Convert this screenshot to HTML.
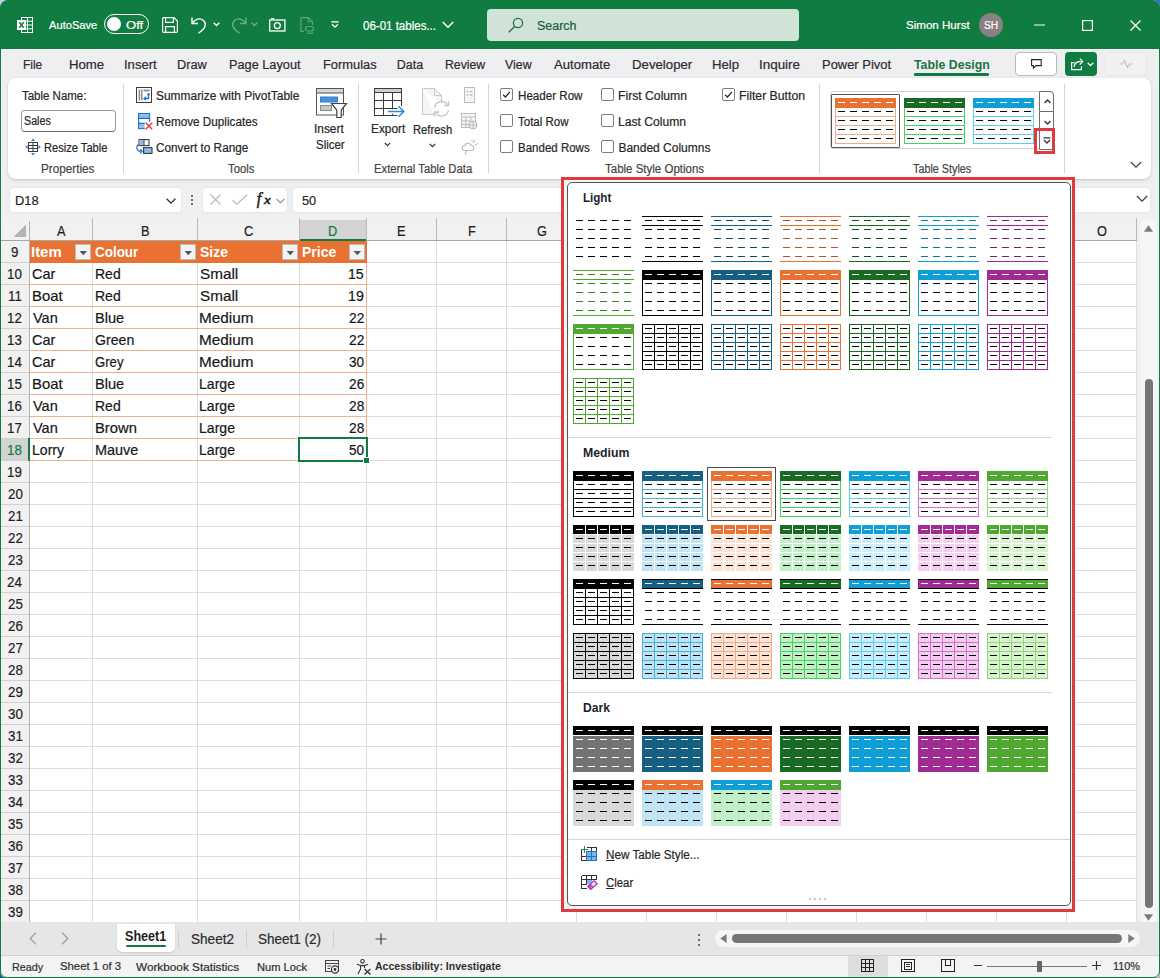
<!DOCTYPE html>
<html lang="en"><head><meta charset="utf-8"><title>Excel - Table Styles</title>
<style>
*{box-sizing:border-box;margin:0;padding:0}
html,body{width:1160px;height:978px;overflow:hidden}
body{background:#999;font-family:"Liberation Sans",sans-serif;position:relative}
#w{position:absolute;left:0;top:0;width:1160px;height:978px;background:#efeff1;border-radius:8px 8px 7px 7px;overflow:hidden}
#w div,#w svg,#w span.t{position:absolute}
span.t{white-space:pre;line-height:1;transform-origin:0 0;display:block;-webkit-text-stroke:0.2px}
svg{overflow:visible}
i.c{position:absolute;width:12px;height:12px}
#w:after{content:'';position:absolute;left:0;top:0;right:0;bottom:0;border:1px solid #107c41;border-radius:8px 8px 7px 7px;pointer-events:none}
</style></head>
<body><i class="c" style="left:0;top:0;background:#c3cdec"></i><i class="c" style="right:0;top:0;background:#2c70dc"></i><i class="c" style="left:0;bottom:0;background:#0f5f8e"></i><i class="c" style="right:0;bottom:0;background:#b5b5b5"></i><div id="w">
<div style="left:0px;top:0px;width:1160px;height:49px;background:#107c41;"></div>
<svg style="left:17px;top:17px;" width="17" height="17" viewBox="0 0 17 17">
<rect x="4.5" y="0.5" width="11" height="15" fill="none" stroke="#fff" stroke-width="1"/>
<path d="M4.5 4.2H15.5M4.5 8H15.5M4.5 11.8H15.5M10.5 0.5V15.5" stroke="#fff" stroke-width="1" fill="none"/>
<rect x="0" y="3" width="9" height="10" fill="#fff"/>
<path d="M2.3 5.2L6.7 10.8M6.7 5.2L2.3 10.8" stroke="#107c41" stroke-width="1.5" fill="none"/>
</svg>
<span class="t" style="left:48.80px;top:20.00px;font-size:11px;color:#fff;transform:scaleX(1.0127);">AutoSave</span>
<div style="left:104px;top:14px;width:45px;height:20px;border:1.3px solid #fff;border-radius:10px;"></div>
<div style="left:107px;top:17px;width:14px;height:14px;background:#fff;border-radius:50%;"></div>
<span class="t" style="left:125.81px;top:20.00px;font-size:11px;color:#fff;transform:scaleX(1.1857);">Off</span>
<svg style="left:162px;top:17px;" width="16" height="16" viewBox="0 0 16 16">
<path d="M1.5 0.6H12L15.4 4V14.2Q15.4 15.4 14.2 15.4H1.8Q0.6 15.4 0.6 14.2V1.5Q0.6 0.6 1.5 0.6Z" fill="none" stroke="#fff" stroke-width="1.2"/>
<path d="M3.6 0.6V5.4H11.4V0.6M3.6 15.4V9.6H12.4V15.4" fill="none" stroke="#fff" stroke-width="1.2"/>
</svg>
<svg style="left:191px;top:16px;" width="17" height="18" viewBox="0 0 17 18">
<path d="M1 1.5V7.5H7" fill="none" stroke="#fff" stroke-width="1.4"/>
<path d="M1.5 7C4 3 9 1.5 12.5 4.5C15.5 7.5 14.5 11.5 11.5 14L7.5 17.3" fill="none" stroke="#fff" stroke-width="1.4"/>
</svg>
<svg style="left:213px;top:22px;" width="7" height="5" viewBox="0 0 7 5"><path d="M0.7 0.8L3.5 3.6L6.3 0.8" fill="none" stroke="#fff" stroke-width="1.4"/></svg>
<svg style="left:230px;top:16px;" width="17" height="18" viewBox="0 0 17 18">
<path d="M16 1.5V7.5H10" fill="none" stroke="#6bb08a" stroke-width="1.4"/>
<path d="M15.5 7C13 3 8 1.5 4.5 4.5C1.5 7.5 2.5 11.5 5.5 14L9.5 17.3" fill="none" stroke="#6bb08a" stroke-width="1.4"/>
</svg>
<svg style="left:251px;top:22px;" width="7" height="5" viewBox="0 0 7 5"><path d="M0.7 0.8L3.5 3.6L6.3 0.8" fill="none" stroke="#6bb08a" stroke-width="1.4"/></svg>
<svg style="left:269px;top:18px;" width="17" height="14" viewBox="0 0 17 14">
<rect x="0.7" y="2" width="15.2" height="11" fill="none" stroke="#fff" stroke-width="1.3"/>
<path d="M2 0.7H5.2" stroke="#fff" stroke-width="1.3"/>
<circle cx="8.3" cy="7.6" r="3" fill="none" stroke="#fff" stroke-width="1.3"/>
</svg>
<svg style="left:300px;top:17px;" width="15" height="17" viewBox="0 0 15 17">
<path d="M1 0.6H8.5L12.5 4.6V8M1 0.6V14.4H4" fill="none" stroke="#5aa67c" stroke-width="1.2"/>
<path d="M8.3 0.8V4.8H12.3" fill="none" stroke="#5aa67c" stroke-width="1.1"/>
<rect x="5.5" y="9.5" width="8" height="4.5" rx="2.2" fill="none" stroke="#5aa67c" stroke-width="1.2"/>
<path d="M7 16.2H13.5" stroke="#5aa67c" stroke-width="1.2"/>
</svg>
<svg style="left:330.5px;top:21px;" width="8" height="7" viewBox="0 0 8 7"><path d="M0.3 0.9H7.7" stroke="#fff" stroke-width="1.3"/><path d="M1 3.3L4 6.2L7 3.3" fill="none" stroke="#fff" stroke-width="1.3"/></svg>
<span class="t" style="left:363.32px;top:20.00px;font-size:12px;color:#fff;transform:scaleX(0.9597);">06-01 tables...</span>
<svg style="left:442px;top:21px;" width="12" height="8" viewBox="0 0 12 8"><path d="M0.8 1L6 6.2L11.2 1" fill="none" stroke="#fff" stroke-width="1.4"/></svg>
<div style="left:487px;top:9px;width:312px;height:32px;background:#cfe3d7;border-radius:4px;"></div>
<svg style="left:508px;top:17px;" width="16" height="16" viewBox="0 0 16 16"><circle cx="10" cy="6" r="4.6" fill="none" stroke="#2b6b48" stroke-width="1.3"/><path d="M6.6 9.4L0.8 15.2" stroke="#2b6b48" stroke-width="1.4"/></svg>
<span class="t" style="left:536.88px;top:20.00px;font-size:12px;color:#1f5c3b;transform:scaleX(1.0381);">Search</span>
<span class="t" style="left:906.45px;top:20.00px;font-size:10.5px;color:#fff;transform:scaleX(1.1014);">Simon Hurst</span>
<div style="left:979px;top:13px;width:24px;height:24px;background:#8b8082;border-radius:50%;"></div>
<span class="t" style="left:983.99px;top:21.00px;font-size:10px;color:#fff;transform:scaleX(1.0159);">SH</span>
<svg style="left:1034px;top:24px;" width="11" height="2" viewBox="0 0 11 2"><path d="M0 1H11" stroke="#fff" stroke-width="1.2"/></svg>
<svg style="left:1082px;top:20px;" width="11" height="11" viewBox="0 0 11 11"><rect x="0.6" y="0.6" width="9.8" height="9.8" fill="none" stroke="#fff" stroke-width="1.2"/></svg>
<svg style="left:1130px;top:20px;" width="11" height="11" viewBox="0 0 11 11"><path d="M0.5 0.5L10.5 10.5M10.5 0.5L0.5 10.5" stroke="#fff" stroke-width="1.2"/></svg>
<div style="left:0px;top:49px;width:1px;height:929px;background:#107c41;"></div>
<div style="left:1159px;top:49px;width:1px;height:929px;background:#107c41;"></div>
<div style="left:0px;top:977px;width:1160px;height:1px;background:#107c41;"></div>
<span class="t" style="left:22.64px;top:59.00px;font-size:12.5px;color:#2b2b2b;transform:scaleX(0.9570);">File</span>
<span class="t" style="left:68.75px;top:59.00px;font-size:12.5px;color:#2b2b2b;transform:scaleX(1.0535);">Home</span>
<span class="t" style="left:124.15px;top:59.00px;font-size:12.5px;color:#2b2b2b;transform:scaleX(1.0432);">Insert</span>
<span class="t" style="left:177.38px;top:59.00px;font-size:12.5px;color:#2b2b2b;transform:scaleX(1.0213);">Draw</span>
<span class="t" style="left:229.48px;top:59.00px;font-size:12.5px;color:#2b2b2b;transform:scaleX(1.0188);">Page Layout</span>
<span class="t" style="left:322.57px;top:59.00px;font-size:12.5px;color:#2b2b2b;transform:scaleX(1.0296);">Formulas</span>
<span class="t" style="left:396.80px;top:59.00px;font-size:12.5px;color:#2b2b2b;">Data</span>
<span class="t" style="left:444.52px;top:59.00px;font-size:12.5px;color:#2b2b2b;transform:scaleX(0.9800);">Review</span>
<span class="t" style="left:505.10px;top:59.00px;font-size:12.5px;color:#2b2b2b;transform:scaleX(0.9888);">View</span>
<span class="t" style="left:554.00px;top:59.00px;font-size:12.5px;color:#2b2b2b;transform:scaleX(1.0509);">Automate</span>
<span class="t" style="left:631.54px;top:59.00px;font-size:12.5px;color:#2b2b2b;transform:scaleX(1.0573);">Developer</span>
<span class="t" style="left:711.55px;top:59.00px;font-size:12.5px;color:#2b2b2b;transform:scaleX(1.0537);">Help</span>
<span class="t" style="left:759.12px;top:59.00px;font-size:12.5px;color:#2b2b2b;transform:scaleX(1.0738);">Inquire</span>
<span class="t" style="left:822.26px;top:59.00px;font-size:12.5px;color:#2b2b2b;transform:scaleX(1.0351);">Power Pivot</span>
<span class="t" style="left:913.70px;top:59.00px;font-size:12.5px;color:#1a7343;transform:scaleX(0.9868);font-weight:700;-webkit-text-stroke:0;">Table Design</span>
<div style="left:913.8px;top:73px;width:75px;height:2.5px;background:#107c41;border-radius:1px;"></div>
<div style="left:1015px;top:52px;width:42px;height:24px;background:#fff;border:1px solid #b9b9b9;border-radius:4px;"></div>
<svg style="left:1031px;top:59px;" width="11" height="10" viewBox="0 0 11 10"><path d="M0.6 0.6H10.2V6.6H5L2.4 9.2V6.6H0.6Z" fill="none" stroke="#222" stroke-width="1.1"/></svg>
<div style="left:1065px;top:52px;width:32px;height:24px;background:#107c41;border-radius:4px;"></div>
<svg style="left:1070px;top:57px;" width="14" height="14" viewBox="0 0 14 14">
<path d="M4.5 5.6H1.6V12.6H11.4V9.6" fill="none" stroke="#fff" stroke-width="1.2"/>
<path d="M4 10C4.5 6.5 7 4.6 10 4.6H12.6M9.8 1.6L12.8 4.6L9.8 7.6" fill="none" stroke="#fff" stroke-width="1.2"/>
</svg>
<svg style="left:1087px;top:62px;" width="7" height="5" viewBox="0 0 7 5"><path d="M0.7 0.8L3.5 3.6L6.3 0.8" fill="none" stroke="#fff" stroke-width="1.3"/></svg>
<div style="left:1105px;top:52px;width:42px;height:24px;background:#f1f1f1;border:1px solid #e6e6e6;border-radius:4px;"></div>
<svg style="left:1119px;top:59px;" width="14" height="10" viewBox="0 0 14 10"><path d="M0.5 5H3.5L5.5 1.5L8.5 8.5L10.5 5H13.5" fill="none" stroke="#c4c4c4" stroke-width="1.2"/></svg>
<div style="left:8px;top:78px;width:1143px;height:100.5px;background:#fff;border-radius:8px;box-shadow:0 1px 3px rgba(0,0,0,.18);"></div>
<div style="left:123px;top:84px;width:1px;height:89px;background:#d4d4d4;"></div>
<div style="left:358px;top:84px;width:1px;height:89px;background:#d4d4d4;"></div>
<div style="left:488px;top:84px;width:1px;height:89px;background:#d4d4d4;"></div>
<div style="left:819px;top:84px;width:1px;height:89px;background:#d4d4d4;"></div>
<div style="left:1064px;top:84px;width:1px;height:89px;background:#d4d4d4;"></div>
<span class="t" style="left:21.71px;top:90.00px;font-size:12px;color:#262626;transform:scaleX(0.9560);">Table Name:</span>
<div style="left:21px;top:110px;width:95px;height:21.5px;background:#fff;border:1px solid #9a9a9a;border-bottom-color:#6e6e6e;border-radius:4px;"></div>
<span class="t" style="left:23.55px;top:115.00px;font-size:12px;color:#262626;transform:scaleX(0.8935);">Sales</span>
<svg style="left:25px;top:138px;" width="16" height="17" viewBox="0 0 16 17">
<rect x="3.5" y="4.5" width="9" height="9" fill="#fff" stroke="#3b3b3b" stroke-width="1"/>
<path d="M3.5 7.5H12.5M3.5 10.5H12.5M8 4.5V13.5" stroke="#3b3b3b" stroke-width="1"/>
<path d="M8 0.6L10 3H6ZM8 17.4L10 15H6ZM0.2 9L2.6 7V11ZM15.8 9L13.4 7V11Z" fill="#2f7fd0"/>
</svg>
<span class="t" style="left:44.07px;top:142.00px;font-size:12px;color:#262626;transform:scaleX(0.9254);">Resize Table</span>
<span class="t" style="left:41.02px;top:163.00px;font-size:12px;color:#444;transform:scaleX(0.9756);">Properties</span>
<svg style="left:136px;top:87px;" width="16" height="16" viewBox="0 0 16 16">
<rect x="0.5" y="0.5" width="15" height="15" fill="#fff" stroke="#3b3b3b" stroke-width="1"/>
<rect x="2.6" y="2.6" width="1.5" height="10.8" fill="#8c8c8c"/><rect x="5" y="2.6" width="1.5" height="10.8" fill="#8c8c8c"/>
<rect x="7.6" y="2.6" width="6" height="1.8" fill="#8c8c8c"/>
<path d="M12.5 7.5V11.5H8.8" fill="none" stroke="#1e73c8" stroke-width="1.3"/>
<circle cx="12.5" cy="7.2" r="1.2" fill="#1e73c8"/>
<path d="M10 9.6L8 11.5L10 13.4" fill="none" stroke="#1e73c8" stroke-width="1.2"/>
</svg>
<span class="t" style="left:155.50px;top:90.00px;font-size:12px;color:#262626;transform:scaleX(0.9951);">Summarize with PivotTable</span>
<svg style="left:138px;top:113px;" width="15" height="17" viewBox="0 0 15 17">
<rect x="0.6" y="0.6" width="11" height="15" fill="#fff" stroke="#1e73c8" stroke-width="1.2"/>
<rect x="1" y="1" width="10.2" height="4" fill="#8fbcec"/>
<rect x="1" y="10.6" width="5.6" height="4.6" fill="#8fbcec"/>
<path d="M0.6 5.4H11.6M0.6 10.4H7" stroke="#1e73c8" stroke-width="1.1"/>
<rect x="6.8" y="8.8" width="8" height="8" fill="#fff"/>
<path d="M7.8 9.8L14.2 16.2M14.2 9.8L7.8 16.2" stroke="#e0383e" stroke-width="1.4"/>
</svg>
<span class="t" style="left:155.72px;top:116.00px;font-size:12px;color:#262626;transform:scaleX(0.9756);">Remove Duplicates</span>
<svg style="left:136px;top:139px;" width="17" height="16" viewBox="0 0 17 16">
<rect x="3" y="0.6" width="10" height="6" fill="#fff" stroke="#3b3b3b" stroke-width="1.1"/>
<rect x="3.5" y="1.1" width="4.2" height="5" fill="#8fbcec"/>
<path d="M8 0.6V6.6" stroke="#3b3b3b" stroke-width="1"/>
<rect x="7.6" y="8.6" width="8.4" height="5.8" fill="#8fbcec" stroke="#3b3b3b" stroke-width="1.1"/>
<path d="M2.6 5.2C0.2 6.6 0 10.8 3 12.2H5.6" fill="none" stroke="#1e73c8" stroke-width="1.3"/>
<path d="M4 10.2L6.2 12.2L4 14.4" fill="none" stroke="#1e73c8" stroke-width="1.2"/>
</svg>
<span class="t" style="left:156.11px;top:142.00px;font-size:12px;color:#262626;transform:scaleX(0.9817);">Convert to Range</span>
<span class="t" style="left:228.22px;top:163.00px;font-size:12px;color:#444;transform:scaleX(0.9451);">Tools</span>
<svg style="left:316px;top:88px;" width="31" height="30" viewBox="0 0 31 30">
<rect x="0.5" y="0.5" width="27" height="26.5" fill="#fff" stroke="#555" stroke-width="1"/>
<rect x="0.5" y="0.5" width="27" height="4.5" fill="#d6d6d6" stroke="#555" stroke-width="1"/>
<rect x="4.5" y="9" width="17" height="5" fill="#4a90d9" stroke="#2f7fd0" stroke-width="1"/>
<rect x="4.5" y="17.5" width="11" height="5" fill="#c8c8c8" stroke="#8a8a8a" stroke-width="1"/>
<path d="M15.5 15.5H30.5L25.2 22V29.5H20.8V22Z" fill="#fff" stroke="#444" stroke-width="1.2"/>
</svg>
<span class="t" style="left:314.31px;top:123.00px;font-size:12px;color:#262626;transform:scaleX(0.9896);">Insert</span>
<span class="t" style="left:315.52px;top:139.00px;font-size:12px;color:#262626;transform:scaleX(0.9556);">Slicer</span>
<svg style="left:374px;top:88px;" width="31" height="29" viewBox="0 0 31 29">
<rect x="0.5" y="0.5" width="27" height="27" fill="#fff" stroke="#3b3b3b" stroke-width="1"/>
<rect x="0.5" y="0.5" width="27" height="4" fill="#cfcfcf" stroke="#3b3b3b" stroke-width="1"/>
<path d="M9.5 4.5V27.5M18.5 4.5V27.5M0.5 12.5H27.5M0.5 20.5H27.5" stroke="#3b3b3b" stroke-width="1"/>
<path d="M14 23.5H29.5M24.5 18.3L29.8 23.5L24.5 28.7" fill="none" stroke="#fff" stroke-width="4.5"/>
<path d="M14 23.5H29.5M24.5 18.3L29.8 23.5L24.5 28.7" fill="none" stroke="#2b88d8" stroke-width="1.5"/>
</svg>
<span class="t" style="left:370.51px;top:123.00px;font-size:12px;color:#262626;transform:scaleX(0.9881);">Export</span>
<svg style="left:384px;top:142px;" width="7" height="5" viewBox="0 0 7 5"><path d="M0.7 0.8L3.5 3.6L6.3 0.8" fill="none" stroke="#333" stroke-width="1.2"/></svg>
<svg style="left:422px;top:88px;" width="28" height="29" viewBox="0 0 28 29">
<path d="M0.5 0.5H12.5L19.5 7.5V15M0.5 0.5V26.5H12" fill="#f4f4f4" stroke="#c9c9c9" stroke-width="1"/>
<path d="M12.5 0.5V7.5H19.5" fill="none" stroke="#c9c9c9" stroke-width="1"/>
<path d="M12.5 19.5A7 7 0 0 1 25.5 17M26.5 22A7 7 0 0 1 13.5 24.5" fill="none" stroke="#c4c4c4" stroke-width="1.3"/>
<path d="M26.5 13V17.5H22M12.5 28.5V24H17" fill="none" stroke="#c4c4c4" stroke-width="1.3"/>
</svg>
<span class="t" style="left:412.57px;top:124.00px;font-size:12px;color:#262626;transform:scaleX(0.9328);">Refresh</span>
<svg style="left:429px;top:143px;" width="7" height="5" viewBox="0 0 7 5"><path d="M0.7 0.8L3.5 3.6L6.3 0.8" fill="none" stroke="#333" stroke-width="1.2"/></svg>
<svg style="left:462px;top:87px;" width="15" height="17" viewBox="0 0 15 17">
<rect x="2.5" y="0.5" width="10" height="15" fill="#f6f6f6" stroke="#bdbdbd" stroke-width="1"/>
<path d="M4.5 4.5H6.5M8 4.5H10.5M4.5 8H6.5M8 8H10.5" stroke="#bdbdbd" stroke-width="1.4"/>
</svg>
<svg style="left:461px;top:113px;" width="17" height="17" viewBox="0 0 17 17">
<rect x="0.5" y="0.5" width="14" height="14" fill="#f6f6f6" stroke="#bdbdbd" stroke-width="1"/>
<path d="M0.5 4H14.5M5 4V14.5M10 4V8M0.5 8H9M0.5 11.5H8" stroke="#bdbdbd" stroke-width="1"/>
<circle cx="12" cy="12" r="4" fill="#ececec" stroke="#b5b5b5" stroke-width="1"/>
<path d="M8 12H16M12 8V16" stroke="#b5b5b5" stroke-width="0.8"/>
</svg>
<svg style="left:461px;top:139px;" width="17" height="17" viewBox="0 0 17 17">
<path d="M3.5 11.5C0.5 11.5 0.5 6.5 4 6.5C4.5 3.5 9.5 3.5 10 6.5C13.5 6 14 11.5 10.5 11.5Z" fill="none" stroke="#bdbdbd" stroke-width="1.2"/>
<path d="M12 4L14 1M14 6L16.5 4.5M11 2.5V0.5M5.5 11.5L4 16" stroke="#bdbdbd" stroke-width="1.1"/>
</svg>
<span class="t" style="left:374.36px;top:163.00px;font-size:12px;color:#444;transform:scaleX(0.9391);">External Table Data</span>
<div style="left:500px;top:88px;width:13px;height:13px;background:#fff;border:1px solid #7d7d7d;border-radius:2px;"></div>
<svg style="left:500px;top:88px;" width="13" height="13" viewBox="0 0 13 13"><path d="M3 6.6L5.4 9L10 3.8" fill="none" stroke="#222" stroke-width="1.2"/></svg>
<div style="left:500px;top:114px;width:13px;height:13px;background:#fff;border:1px solid #7d7d7d;border-radius:2px;"></div>
<div style="left:500px;top:140px;width:13px;height:13px;background:#fff;border:1px solid #7d7d7d;border-radius:2px;"></div>
<span class="t" style="left:517.53px;top:90.00px;font-size:12px;color:#262626;transform:scaleX(0.9665);">Header Row</span>
<span class="t" style="left:518.21px;top:116.00px;font-size:12px;color:#262626;transform:scaleX(0.9580);">Total Row</span>
<span class="t" style="left:517.54px;top:142.00px;font-size:12px;color:#262626;transform:scaleX(0.9591);">Banded Rows</span>
<div style="left:601px;top:88px;width:13px;height:13px;background:#fff;border:1px solid #7d7d7d;border-radius:2px;"></div>
<div style="left:601px;top:114px;width:13px;height:13px;background:#fff;border:1px solid #7d7d7d;border-radius:2px;"></div>
<div style="left:601px;top:140px;width:13px;height:13px;background:#fff;border:1px solid #7d7d7d;border-radius:2px;"></div>
<span class="t" style="left:618.38px;top:90.00px;font-size:12px;color:#262626;transform:scaleX(1.0151);">First Column</span>
<span class="t" style="left:618.39px;top:116.00px;font-size:12px;color:#262626;transform:scaleX(1.0091);">Last Column</span>
<span class="t" style="left:618.40px;top:142.00px;font-size:12px;color:#262626;">Banded Columns</span>
<div style="left:722px;top:88px;width:13px;height:13px;background:#fff;border:1px solid #7d7d7d;border-radius:2px;"></div>
<svg style="left:722px;top:88px;" width="13" height="13" viewBox="0 0 13 13"><path d="M3 6.6L5.4 9L10 3.8" fill="none" stroke="#222" stroke-width="1.2"/></svg>
<span class="t" style="left:739.38px;top:90.00px;font-size:12px;color:#262626;transform:scaleX(1.0207);">Filter Button</span>
<span class="t" style="left:604.71px;top:163.00px;font-size:12px;color:#444;transform:scaleX(0.9581);">Table Style Options</span>
<span class="t" style="left:913.33px;top:163.00px;font-size:12px;color:#444;transform:scaleX(0.9000);">Table Styles</span>
<svg style="left:1130px;top:161px;" width="12" height="8" viewBox="0 0 12 8"><path d="M0.8 1L6 6.2L11.2 1" fill="none" stroke="#444" stroke-width="1.3"/></svg>
<div style="left:830px;top:91px;width:224px;height:58px;background:#fff;border:1px solid #d2d2d2;border-radius:4px;"></div>
<div style="left:1039px;top:91px;width:15px;height:21px;border:1px solid #6e6e6e;border-radius:0 4px 0 0;background:#fff;"></div>
<div style="left:1039px;top:111px;width:15px;height:39px;border:1px solid #6e6e6e;border-radius:0 0 3px 0;background:#fff;"></div>
<svg style="left:1043.5px;top:98.5px;" width="7" height="5" viewBox="0 0 7 5"><path d="M0.6 3.9L3.5 1L6.4 3.9" fill="none" stroke="#333" stroke-width="1.4"/></svg>
<svg style="left:1043.5px;top:120px;" width="7" height="5" viewBox="0 0 7 5"><path d="M0.6 1L3.5 3.9L6.4 1" fill="none" stroke="#333" stroke-width="1.4"/></svg>
<svg style="left:1043px;top:136.5px;" width="8" height="7" viewBox="0 0 8 7"><path d="M0.5 0.9H7.5" stroke="#333" stroke-width="1.2"/><path d="M1 3L4 6L7 3" fill="none" stroke="#333" stroke-width="1.4"/></svg>
<div style="left:1034px;top:128px;width:21px;height:25.5px;border:3px solid #e03a3c;"></div>
<div style="left:831px;top:94px;width:69px;height:54px;border:1px solid #555;border-radius:1px;"></div>
<div style="left:10px;top:188px;width:171px;height:24px;background:#fff;border-radius:4px;box-shadow:0 0 0 1px #e7e7e7;"></div>
<div style="left:203px;top:188px;width:84px;height:24px;background:#fff;border-radius:4px;box-shadow:0 0 0 1px #e7e7e7;"></div>
<div style="left:293px;top:188px;width:857px;height:24px;background:#fff;border-radius:4px;box-shadow:0 0 0 1px #e7e7e7;"></div>
<span class="t" style="left:15.31px;top:194.00px;font-size:13px;color:#262626;transform:scaleX(0.9910);">D18</span>
<svg style="left:166px;top:198px;" width="10" height="6" viewBox="0 0 10 6"><path d="M0.6 0.8L5 5.2L9.4 0.8" fill="none" stroke="#333" stroke-width="1.3"/></svg>
<div style="left:190.6px;top:195px;width:2px;height:2px;background:#444;border-radius:1px;"></div>
<div style="left:190.6px;top:199px;width:2px;height:2px;background:#444;border-radius:1px;"></div>
<div style="left:190.6px;top:203px;width:2px;height:2px;background:#444;border-radius:1px;"></div>
<svg style="left:210px;top:194px;" width="11" height="11" viewBox="0 0 11 11"><path d="M0.5 0.5L10.5 10.5M10.5 0.5L0.5 10.5" stroke="#b9b9b9" stroke-width="1.2"/></svg>
<svg style="left:231.5px;top:194px;" width="16" height="11" viewBox="0 0 16 11"><path d="M0.6 6.2L4.8 10.2L15.2 0.8" fill="none" stroke="#b9b9b9" stroke-width="1.2"/></svg>
<span class="t" style="left:256.80px;top:191.00px;font-size:16px;color:#222;font-style:italic;font-family:'Liberation Serif',serif;-webkit-text-stroke:0.5px;">f</span>
<span class="t" style="left:263.63px;top:193.00px;font-size:13px;color:#222;transform:scaleX(1.1695);font-style:italic;font-family:'Liberation Serif',serif;-webkit-text-stroke:0.5px;">x</span>
<svg style="left:276px;top:198px;" width="9" height="6" viewBox="0 0 9 6"><path d="M0.6 0.8L4.5 4.7L8.4 0.8" fill="none" stroke="#8f8f8f" stroke-width="1.1"/></svg>
<span class="t" style="left:302.41px;top:194.00px;font-size:13px;color:#262626;transform:scaleX(0.9776);">50</span>
<svg style="left:1136px;top:195px;" width="12" height="8" viewBox="0 0 12 8"><path d="M0.8 1L6 6.2L11.2 1" fill="none" stroke="#444" stroke-width="1.3"/></svg>
<div style="left:1px;top:218px;width:1136px;height:23px;background:#f1f1f1;"></div>
<div style="left:1px;top:220px;width:29px;height:702px;background:#f1f1f1;"></div>
<div style="left:30px;top:241px;width:1107px;height:681px;background:#fff;"></div>
<svg style="left:0px;top:0px;shape-rendering:crispEdges;" width="1160" height="978" viewBox="0 0 1160 978"><rect x="30" y="262" width="1107" height="1" fill="#dddddd"/><rect x="1" y="262" width="28" height="1" fill="#d2d2d2"/><rect x="30" y="284" width="1107" height="1" fill="#dddddd"/><rect x="1" y="284" width="28" height="1" fill="#d2d2d2"/><rect x="30" y="306" width="1107" height="1" fill="#dddddd"/><rect x="1" y="306" width="28" height="1" fill="#d2d2d2"/><rect x="30" y="328" width="1107" height="1" fill="#dddddd"/><rect x="1" y="328" width="28" height="1" fill="#d2d2d2"/><rect x="30" y="350" width="1107" height="1" fill="#dddddd"/><rect x="1" y="350" width="28" height="1" fill="#d2d2d2"/><rect x="30" y="372" width="1107" height="1" fill="#dddddd"/><rect x="1" y="372" width="28" height="1" fill="#d2d2d2"/><rect x="30" y="394" width="1107" height="1" fill="#dddddd"/><rect x="1" y="394" width="28" height="1" fill="#d2d2d2"/><rect x="30" y="416" width="1107" height="1" fill="#dddddd"/><rect x="1" y="416" width="28" height="1" fill="#d2d2d2"/><rect x="30" y="438" width="1107" height="1" fill="#dddddd"/><rect x="1" y="438" width="28" height="1" fill="#d2d2d2"/><rect x="30" y="460" width="1107" height="1" fill="#dddddd"/><rect x="1" y="460" width="28" height="1" fill="#d2d2d2"/><rect x="30" y="482" width="1107" height="1" fill="#dddddd"/><rect x="1" y="482" width="28" height="1" fill="#d2d2d2"/><rect x="30" y="504" width="1107" height="1" fill="#dddddd"/><rect x="1" y="504" width="28" height="1" fill="#d2d2d2"/><rect x="30" y="526" width="1107" height="1" fill="#dddddd"/><rect x="1" y="526" width="28" height="1" fill="#d2d2d2"/><rect x="30" y="548" width="1107" height="1" fill="#dddddd"/><rect x="1" y="548" width="28" height="1" fill="#d2d2d2"/><rect x="30" y="570" width="1107" height="1" fill="#dddddd"/><rect x="1" y="570" width="28" height="1" fill="#d2d2d2"/><rect x="30" y="592" width="1107" height="1" fill="#dddddd"/><rect x="1" y="592" width="28" height="1" fill="#d2d2d2"/><rect x="30" y="614" width="1107" height="1" fill="#dddddd"/><rect x="1" y="614" width="28" height="1" fill="#d2d2d2"/><rect x="30" y="636" width="1107" height="1" fill="#dddddd"/><rect x="1" y="636" width="28" height="1" fill="#d2d2d2"/><rect x="30" y="658" width="1107" height="1" fill="#dddddd"/><rect x="1" y="658" width="28" height="1" fill="#d2d2d2"/><rect x="30" y="680" width="1107" height="1" fill="#dddddd"/><rect x="1" y="680" width="28" height="1" fill="#d2d2d2"/><rect x="30" y="702" width="1107" height="1" fill="#dddddd"/><rect x="1" y="702" width="28" height="1" fill="#d2d2d2"/><rect x="30" y="724" width="1107" height="1" fill="#dddddd"/><rect x="1" y="724" width="28" height="1" fill="#d2d2d2"/><rect x="30" y="746" width="1107" height="1" fill="#dddddd"/><rect x="1" y="746" width="28" height="1" fill="#d2d2d2"/><rect x="30" y="768" width="1107" height="1" fill="#dddddd"/><rect x="1" y="768" width="28" height="1" fill="#d2d2d2"/><rect x="30" y="790" width="1107" height="1" fill="#dddddd"/><rect x="1" y="790" width="28" height="1" fill="#d2d2d2"/><rect x="30" y="812" width="1107" height="1" fill="#dddddd"/><rect x="1" y="812" width="28" height="1" fill="#d2d2d2"/><rect x="30" y="834" width="1107" height="1" fill="#dddddd"/><rect x="1" y="834" width="28" height="1" fill="#d2d2d2"/><rect x="30" y="856" width="1107" height="1" fill="#dddddd"/><rect x="1" y="856" width="28" height="1" fill="#d2d2d2"/><rect x="30" y="878" width="1107" height="1" fill="#dddddd"/><rect x="1" y="878" width="28" height="1" fill="#d2d2d2"/><rect x="30" y="900" width="1107" height="1" fill="#dddddd"/><rect x="1" y="900" width="28" height="1" fill="#d2d2d2"/><rect x="30" y="922" width="1107" height="1" fill="#dddddd"/><rect x="1" y="922" width="28" height="1" fill="#d2d2d2"/><rect x="92" y="241" width="1" height="681" fill="#dddddd"/><rect x="92" y="218" width="1" height="22" fill="#b9b9b9"/><rect x="197" y="241" width="1" height="681" fill="#dddddd"/><rect x="197" y="218" width="1" height="22" fill="#b9b9b9"/><rect x="299" y="241" width="1" height="681" fill="#dddddd"/><rect x="299" y="218" width="1" height="22" fill="#b9b9b9"/><rect x="366" y="241" width="1" height="681" fill="#dddddd"/><rect x="366" y="218" width="1" height="22" fill="#b9b9b9"/><rect x="436" y="241" width="1" height="681" fill="#dddddd"/><rect x="436" y="218" width="1" height="22" fill="#b9b9b9"/><rect x="506" y="241" width="1" height="681" fill="#dddddd"/><rect x="506" y="218" width="1" height="22" fill="#b9b9b9"/><rect x="576" y="241" width="1" height="681" fill="#dddddd"/><rect x="576" y="218" width="1" height="22" fill="#b9b9b9"/><rect x="646" y="241" width="1" height="681" fill="#dddddd"/><rect x="646" y="218" width="1" height="22" fill="#b9b9b9"/><rect x="716" y="241" width="1" height="681" fill="#dddddd"/><rect x="716" y="218" width="1" height="22" fill="#b9b9b9"/><rect x="786" y="241" width="1" height="681" fill="#dddddd"/><rect x="786" y="218" width="1" height="22" fill="#b9b9b9"/><rect x="856" y="241" width="1" height="681" fill="#dddddd"/><rect x="856" y="218" width="1" height="22" fill="#b9b9b9"/><rect x="926" y="241" width="1" height="681" fill="#dddddd"/><rect x="926" y="218" width="1" height="22" fill="#b9b9b9"/><rect x="996" y="241" width="1" height="681" fill="#dddddd"/><rect x="996" y="218" width="1" height="22" fill="#b9b9b9"/><rect x="1066" y="241" width="1" height="681" fill="#dddddd"/><rect x="1066" y="218" width="1" height="22" fill="#b9b9b9"/><rect x="1136" y="241" width="1" height="681" fill="#dddddd"/><rect x="1136" y="218" width="1" height="22" fill="#b9b9b9"/><rect x="1" y="240" width="1136" height="1" fill="#a6a6a6"/><rect x="29" y="221" width="1" height="701" fill="#b4b4b4"/><rect x="300" y="220" width="66" height="20" fill="#d3d3d3"/><rect x="300" y="239" width="66" height="2" fill="#107c41"/><rect x="1" y="439" width="28" height="21" fill="#d3d3d3"/><rect x="28" y="438" width="2" height="23" fill="#107c41"/><path d="M26 224.5V237H13.5Z" fill="#b3b3b3"/></svg>
<span class="t" style="left:57.48px;top:224.00px;font-size:14.5px;color:#1f1f1f;transform:scaleX(0.8800);">A</span>
<span class="t" style="left:140.76px;top:224.00px;font-size:14.5px;color:#1f1f1f;transform:scaleX(0.8800);">B</span>
<span class="t" style="left:244.04px;top:224.00px;font-size:14.5px;color:#1f1f1f;transform:scaleX(0.8800);">C</span>
<span class="t" style="left:328.36px;top:224.00px;font-size:14.5px;color:#107c41;transform:scaleX(0.8800);">D</span>
<span class="t" style="left:397.17px;top:224.00px;font-size:14.5px;color:#1f1f1f;transform:scaleX(0.8800);">E</span>
<span class="t" style="left:467.52px;top:224.00px;font-size:14.5px;color:#1f1f1f;transform:scaleX(0.8800);">F</span>
<span class="t" style="left:536.90px;top:224.00px;font-size:14.5px;color:#1f1f1f;transform:scaleX(0.8800);">G</span>
<span class="t" style="left:607.08px;top:224.00px;font-size:14.5px;color:#1f1f1f;transform:scaleX(0.8800);">H</span>
<span class="t" style="left:679.94px;top:224.00px;font-size:14.5px;color:#1f1f1f;transform:scaleX(0.8800);">I</span>
<span class="t" style="left:748.88px;top:224.00px;font-size:14.5px;color:#1f1f1f;transform:scaleX(0.8800);">J</span>
<span class="t" style="left:816.99px;top:224.00px;font-size:14.5px;color:#1f1f1f;transform:scaleX(0.8800);">K</span>
<span class="t" style="left:887.83px;top:224.00px;font-size:14.5px;color:#1f1f1f;transform:scaleX(0.8800);">L</span>
<span class="t" style="left:956.38px;top:224.00px;font-size:14.5px;color:#1f1f1f;transform:scaleX(0.8800);">M</span>
<span class="t" style="left:1027.08px;top:224.00px;font-size:14.5px;color:#1f1f1f;transform:scaleX(0.8800);">N</span>
<span class="t" style="left:1096.73px;top:224.00px;font-size:14.5px;color:#1f1f1f;transform:scaleX(0.8800);">O</span>
<span class="t" style="left:11.27px;top:245.00px;font-size:14.5px;color:#1f1f1f;transform:scaleX(0.9200);">9</span>
<span class="t" style="left:7.32px;top:267.00px;font-size:14.5px;color:#1f1f1f;transform:scaleX(0.9200);">10</span>
<span class="t" style="left:7.87px;top:289.00px;font-size:14.5px;color:#1f1f1f;transform:scaleX(0.9200);">11</span>
<span class="t" style="left:7.41px;top:311.00px;font-size:14.5px;color:#1f1f1f;transform:scaleX(0.9200);">12</span>
<span class="t" style="left:7.36px;top:333.00px;font-size:14.5px;color:#1f1f1f;transform:scaleX(0.9200);">13</span>
<span class="t" style="left:7.27px;top:355.00px;font-size:14.5px;color:#1f1f1f;transform:scaleX(0.9200);">14</span>
<span class="t" style="left:7.32px;top:377.00px;font-size:14.5px;color:#1f1f1f;transform:scaleX(0.9200);">15</span>
<span class="t" style="left:7.36px;top:399.00px;font-size:14.5px;color:#1f1f1f;transform:scaleX(0.9200);">16</span>
<span class="t" style="left:7.41px;top:421.00px;font-size:14.5px;color:#1f1f1f;transform:scaleX(0.9200);">17</span>
<span class="t" style="left:7.36px;top:443.00px;font-size:14.5px;color:#107c41;transform:scaleX(0.9200);">18</span>
<span class="t" style="left:7.36px;top:465.00px;font-size:14.5px;color:#1f1f1f;transform:scaleX(0.9200);">19</span>
<span class="t" style="left:7.50px;top:487.00px;font-size:14.5px;color:#1f1f1f;transform:scaleX(0.9200);">20</span>
<span class="t" style="left:7.55px;top:509.00px;font-size:14.5px;color:#1f1f1f;transform:scaleX(0.9200);">21</span>
<span class="t" style="left:7.59px;top:531.00px;font-size:14.5px;color:#1f1f1f;transform:scaleX(0.9200);">22</span>
<span class="t" style="left:7.55px;top:553.00px;font-size:14.5px;color:#1f1f1f;transform:scaleX(0.9200);">23</span>
<span class="t" style="left:7.46px;top:575.00px;font-size:14.5px;color:#1f1f1f;transform:scaleX(0.9200);">24</span>
<span class="t" style="left:7.50px;top:597.00px;font-size:14.5px;color:#1f1f1f;transform:scaleX(0.9200);">25</span>
<span class="t" style="left:7.55px;top:619.00px;font-size:14.5px;color:#1f1f1f;transform:scaleX(0.9200);">26</span>
<span class="t" style="left:7.59px;top:641.00px;font-size:14.5px;color:#1f1f1f;transform:scaleX(0.9200);">27</span>
<span class="t" style="left:7.55px;top:663.00px;font-size:14.5px;color:#1f1f1f;transform:scaleX(0.9200);">28</span>
<span class="t" style="left:7.55px;top:685.00px;font-size:14.5px;color:#1f1f1f;transform:scaleX(0.9200);">29</span>
<span class="t" style="left:7.59px;top:707.00px;font-size:14.5px;color:#1f1f1f;transform:scaleX(0.9200);">30</span>
<span class="t" style="left:7.64px;top:729.00px;font-size:14.5px;color:#1f1f1f;transform:scaleX(0.9200);">31</span>
<span class="t" style="left:7.69px;top:751.00px;font-size:14.5px;color:#1f1f1f;transform:scaleX(0.9200);">32</span>
<span class="t" style="left:7.64px;top:773.00px;font-size:14.5px;color:#1f1f1f;transform:scaleX(0.9200);">33</span>
<span class="t" style="left:7.55px;top:795.00px;font-size:14.5px;color:#1f1f1f;transform:scaleX(0.9200);">34</span>
<span class="t" style="left:7.59px;top:817.00px;font-size:14.5px;color:#1f1f1f;transform:scaleX(0.9200);">35</span>
<span class="t" style="left:7.64px;top:839.00px;font-size:14.5px;color:#1f1f1f;transform:scaleX(0.9200);">36</span>
<span class="t" style="left:7.69px;top:861.00px;font-size:14.5px;color:#1f1f1f;transform:scaleX(0.9200);">37</span>
<span class="t" style="left:7.64px;top:883.00px;font-size:14.5px;color:#1f1f1f;transform:scaleX(0.9200);">38</span>
<span class="t" style="left:7.64px;top:905.00px;font-size:14.5px;color:#1f1f1f;transform:scaleX(0.9200);">39</span>
<svg style="left:0px;top:0px;shape-rendering:crispEdges;" width="1160" height="978" viewBox="0 0 1160 978"><rect x="30" y="241" width="337" height="22" fill="#e97132"/><rect x="30" y="284" width="337" height="1" fill="#f4b08a"/><rect x="30" y="306" width="337" height="1" fill="#f4b08a"/><rect x="30" y="328" width="337" height="1" fill="#f4b08a"/><rect x="30" y="350" width="337" height="1" fill="#f4b08a"/><rect x="30" y="372" width="337" height="1" fill="#f4b08a"/><rect x="30" y="394" width="337" height="1" fill="#f4b08a"/><rect x="30" y="416" width="337" height="1" fill="#f4b08a"/><rect x="30" y="438" width="337" height="1" fill="#f4b08a"/><rect x="30" y="460" width="337" height="1" fill="#f4b08a"/><rect x="366" y="263" width="1" height="198" fill="#f4b08a"/><rect x="75" y="244" width="16" height="16" fill="#f3f3f3"/><rect x="75.5" y="244.5" width="15" height="15" fill="none" stroke="#bdbdbd" stroke-width="1"/><rect x="180" y="244" width="16" height="16" fill="#f3f3f3"/><rect x="180.5" y="244.5" width="15" height="15" fill="none" stroke="#bdbdbd" stroke-width="1"/><rect x="282" y="244" width="16" height="16" fill="#f3f3f3"/><rect x="282.5" y="244.5" width="15" height="15" fill="none" stroke="#bdbdbd" stroke-width="1"/><rect x="349" y="244" width="16" height="16" fill="#f3f3f3"/><rect x="349.5" y="244.5" width="15" height="15" fill="none" stroke="#bdbdbd" stroke-width="1"/></svg>
<svg style="left:0px;top:0px;" width="1160" height="978" viewBox="0 0 1160 978"><path d="M79.6 251H87L83.3 255.3Z" fill="#555"/><path d="M184.6 251H192L188.3 255.3Z" fill="#555"/><path d="M286.6 251H294L290.3 255.3Z" fill="#555"/><path d="M353.6 251H361L357.3 255.3Z" fill="#555"/></svg>
<span class="t" style="left:31.47px;top:245.00px;font-size:14.5px;color:#fff;transform:scaleX(1.0287);font-weight:700;-webkit-text-stroke:0;">Item</span>
<span class="t" style="left:94.94px;top:245.00px;font-size:14.5px;color:#fff;transform:scaleX(0.9259);font-weight:700;-webkit-text-stroke:0;">Colour</span>
<span class="t" style="left:200.01px;top:245.00px;font-size:14.5px;color:#fff;transform:scaleX(0.9645);font-weight:700;-webkit-text-stroke:0;">Size</span>
<span class="t" style="left:301.53px;top:245.00px;font-size:14.5px;color:#fff;transform:scaleX(0.9676);font-weight:700;-webkit-text-stroke:0;">Price</span>
<span class="t" style="left:31.93px;top:266.00px;font-size:15px;color:#161616;transform:scaleX(0.9655);">Car</span>
<span class="t" style="left:94.68px;top:266.00px;font-size:15px;color:#161616;transform:scaleX(0.9331);">Red</span>
<span class="t" style="left:199.69px;top:266.00px;font-size:15px;color:#161616;transform:scaleX(1.0196);">Small</span>
<span class="t" style="left:348.37px;top:266.00px;font-size:15px;color:#161616;transform:scaleX(0.9396);">15</span>
<span class="t" style="left:31.51px;top:288.00px;font-size:15px;color:#161616;transform:scaleX(0.9932);">Boat</span>
<span class="t" style="left:94.68px;top:288.00px;font-size:15px;color:#161616;transform:scaleX(0.9331);">Red</span>
<span class="t" style="left:199.69px;top:288.00px;font-size:15px;color:#161616;transform:scaleX(1.0196);">Small</span>
<span class="t" style="left:348.36px;top:288.00px;font-size:15px;color:#161616;transform:scaleX(0.9459);">19</span>
<span class="t" style="left:32.60px;top:310.00px;font-size:15px;color:#161616;transform:scaleX(0.9673);">Van</span>
<span class="t" style="left:94.63px;top:310.00px;font-size:15px;color:#161616;transform:scaleX(0.9716);">Blue</span>
<span class="t" style="left:199.18px;top:310.00px;font-size:15px;color:#161616;transform:scaleX(1.0195);">Medium</span>
<span class="t" style="left:348.76px;top:310.00px;font-size:15px;color:#161616;transform:scaleX(0.9211);">22</span>
<span class="t" style="left:31.93px;top:332.00px;font-size:15px;color:#161616;transform:scaleX(0.9655);">Car</span>
<span class="t" style="left:95.14px;top:332.00px;font-size:15px;color:#161616;transform:scaleX(0.9425);">Green</span>
<span class="t" style="left:199.18px;top:332.00px;font-size:15px;color:#161616;transform:scaleX(1.0195);">Medium</span>
<span class="t" style="left:348.76px;top:332.00px;font-size:15px;color:#161616;transform:scaleX(0.9211);">22</span>
<span class="t" style="left:31.93px;top:354.00px;font-size:15px;color:#161616;transform:scaleX(0.9655);">Car</span>
<span class="t" style="left:95.19px;top:354.00px;font-size:15px;color:#161616;transform:scaleX(0.8774);">Grey</span>
<span class="t" style="left:199.18px;top:354.00px;font-size:15px;color:#161616;transform:scaleX(1.0195);">Medium</span>
<span class="t" style="left:348.86px;top:354.00px;font-size:15px;color:#161616;transform:scaleX(0.9032);">30</span>
<span class="t" style="left:31.51px;top:376.00px;font-size:15px;color:#161616;transform:scaleX(0.9932);">Boat</span>
<span class="t" style="left:94.63px;top:376.00px;font-size:15px;color:#161616;transform:scaleX(0.9716);">Blue</span>
<span class="t" style="left:199.28px;top:376.00px;font-size:15px;color:#161616;transform:scaleX(0.9370);">Large</span>
<span class="t" style="left:348.76px;top:376.00px;font-size:15px;color:#161616;transform:scaleX(0.9150);">26</span>
<span class="t" style="left:32.60px;top:398.00px;font-size:15px;color:#161616;transform:scaleX(0.9673);">Van</span>
<span class="t" style="left:94.68px;top:398.00px;font-size:15px;color:#161616;transform:scaleX(0.9331);">Red</span>
<span class="t" style="left:199.28px;top:398.00px;font-size:15px;color:#161616;transform:scaleX(0.9370);">Large</span>
<span class="t" style="left:348.76px;top:398.00px;font-size:15px;color:#161616;transform:scaleX(0.9150);">28</span>
<span class="t" style="left:32.60px;top:420.00px;font-size:15px;color:#161616;transform:scaleX(0.9673);">Van</span>
<span class="t" style="left:94.62px;top:420.00px;font-size:15px;color:#161616;transform:scaleX(0.9851);">Brown</span>
<span class="t" style="left:199.28px;top:420.00px;font-size:15px;color:#161616;transform:scaleX(0.9370);">Large</span>
<span class="t" style="left:348.76px;top:420.00px;font-size:15px;color:#161616;transform:scaleX(0.9150);">28</span>
<span class="t" style="left:31.57px;top:442.00px;font-size:15px;color:#161616;transform:scaleX(0.9394);">Lorry</span>
<span class="t" style="left:94.64px;top:442.00px;font-size:15px;color:#161616;transform:scaleX(0.9630);">Mauve</span>
<span class="t" style="left:199.28px;top:442.00px;font-size:15px;color:#161616;transform:scaleX(0.9370);">Large</span>
<span class="t" style="left:348.86px;top:442.00px;font-size:15px;color:#161616;transform:scaleX(0.9032);">50</span>
<div style="left:298px;top:437px;width:70px;height:25px;border:2px solid #107c41;"></div>
<div style="left:363px;top:457px;width:7px;height:7px;background:#107c41;border:1px solid #fff;"></div>
<div style="left:1137px;top:220px;width:22px;height:702px;background:#f0f0f2;"></div>
<div style="left:1140px;top:219px;width:17px;height:707px;background:#f6f6f7;border-radius:8.5px;"></div>
<svg style="left:1144px;top:225px;" width="9" height="7" viewBox="0 0 9 7"><path d="M4.5 0.3L9 6.7H0Z" fill="#7a7a7a"/></svg>
<div style="left:1144.5px;top:378.5px;width:8.5px;height:529px;background:#767676;border-radius:4.5px;"></div>
<svg style="left:1144px;top:914px;" width="9" height="7" viewBox="0 0 9 7"><path d="M4.5 6.7L9 0.3H0Z" fill="#7a7a7a"/></svg>
<div style="left:561px;top:177px;width:514px;height:735px;background:#f3f3f3;border:3px solid #e03a3c;"></div>
<div style="left:567px;top:182px;width:504px;height:724px;background:#fff;border:1px solid #555;border-radius:5px;"></div>
<div style="left:568px;top:437px;width:484px;height:1px;background:#d6d6d6;"></div>
<div style="left:568px;top:692px;width:484px;height:1px;background:#d6d6d6;"></div>
<div style="left:568px;top:839px;width:502px;height:1px;background:#d6d6d6;"></div>
<span class="t" style="left:582.83px;top:192.00px;font-size:12px;color:#1e1e2e;transform:scaleX(0.9648);font-weight:700;-webkit-text-stroke:0;">Light</span>
<span class="t" style="left:582.78px;top:447.00px;font-size:12px;color:#1e1e2e;transform:scaleX(1.0251);font-weight:700;-webkit-text-stroke:0;">Medium</span>
<span class="t" style="left:582.79px;top:702.00px;font-size:12px;color:#1e1e2e;transform:scaleX(1.0116);font-weight:700;-webkit-text-stroke:0;">Dark</span>
<svg style="left:0px;top:0px;shape-rendering:crispEdges;" width="1160" height="978" viewBox="0 0 1160 978"><g transform="translate(573,216)"><path d="M3 4.5 h7M15 4.5 h7M27 4.5 h7M39 4.5 h7M51 4.5 h7" stroke="#000" stroke-width="1.2" fill="none"/><path d="M3 13.5 h7M15 13.5 h7M27 13.5 h7M39 13.5 h7M51 13.5 h7" stroke="#000" stroke-width="1.2" fill="none"/><path d="M3 22.5 h7M15 22.5 h7M27 22.5 h7M39 22.5 h7M51 22.5 h7" stroke="#000" stroke-width="1.2" fill="none"/><path d="M3 31.5 h7M15 31.5 h7M27 31.5 h7M39 31.5 h7M51 31.5 h7" stroke="#000" stroke-width="1.2" fill="none"/><path d="M3 40.5 h7M15 40.5 h7M27 40.5 h7M39 40.5 h7M51 40.5 h7" stroke="#000" stroke-width="1.2" fill="none"/></g><g transform="translate(642,216)"><rect x="0" y="0" width="61" height="1" fill="#000000"/><rect x="0" y="9" width="61" height="1" fill="#000000"/><rect x="0" y="45" width="61" height="1" fill="#000000"/><path d="M3 4.5 h7M15 4.5 h7M27 4.5 h7M39 4.5 h7M51 4.5 h7" stroke="#000000" stroke-width="1.2" fill="none"/><path d="M3 13.5 h7M15 13.5 h7M27 13.5 h7M39 13.5 h7M51 13.5 h7" stroke="#000000" stroke-width="1.2" fill="none"/><path d="M3 22.5 h7M15 22.5 h7M27 22.5 h7M39 22.5 h7M51 22.5 h7" stroke="#000000" stroke-width="1.2" fill="none"/><path d="M3 31.5 h7M15 31.5 h7M27 31.5 h7M39 31.5 h7M51 31.5 h7" stroke="#000000" stroke-width="1.2" fill="none"/><path d="M3 40.5 h7M15 40.5 h7M27 40.5 h7M39 40.5 h7M51 40.5 h7" stroke="#000000" stroke-width="1.2" fill="none"/></g><g transform="translate(711,216)"><rect x="0" y="0" width="61" height="1" fill="#156082"/><rect x="0" y="9" width="61" height="1" fill="#156082"/><rect x="0" y="45" width="61" height="1" fill="#156082"/><path d="M3 4.5 h7M15 4.5 h7M27 4.5 h7M39 4.5 h7M51 4.5 h7" stroke="#0f4861" stroke-width="1.2" fill="none"/><path d="M3 13.5 h7M15 13.5 h7M27 13.5 h7M39 13.5 h7M51 13.5 h7" stroke="#0f4861" stroke-width="1.2" fill="none"/><path d="M3 22.5 h7M15 22.5 h7M27 22.5 h7M39 22.5 h7M51 22.5 h7" stroke="#0f4861" stroke-width="1.2" fill="none"/><path d="M3 31.5 h7M15 31.5 h7M27 31.5 h7M39 31.5 h7M51 31.5 h7" stroke="#0f4861" stroke-width="1.2" fill="none"/><path d="M3 40.5 h7M15 40.5 h7M27 40.5 h7M39 40.5 h7M51 40.5 h7" stroke="#0f4861" stroke-width="1.2" fill="none"/></g><g transform="translate(780,216)"><rect x="0" y="0" width="61" height="1" fill="#E97132"/><rect x="0" y="9" width="61" height="1" fill="#E97132"/><rect x="0" y="45" width="61" height="1" fill="#E97132"/><path d="M3 4.5 h7M15 4.5 h7M27 4.5 h7M39 4.5 h7M51 4.5 h7" stroke="#ae5425" stroke-width="1.2" fill="none"/><path d="M3 13.5 h7M15 13.5 h7M27 13.5 h7M39 13.5 h7M51 13.5 h7" stroke="#ae5425" stroke-width="1.2" fill="none"/><path d="M3 22.5 h7M15 22.5 h7M27 22.5 h7M39 22.5 h7M51 22.5 h7" stroke="#ae5425" stroke-width="1.2" fill="none"/><path d="M3 31.5 h7M15 31.5 h7M27 31.5 h7M39 31.5 h7M51 31.5 h7" stroke="#ae5425" stroke-width="1.2" fill="none"/><path d="M3 40.5 h7M15 40.5 h7M27 40.5 h7M39 40.5 h7M51 40.5 h7" stroke="#ae5425" stroke-width="1.2" fill="none"/></g><g transform="translate(849,216)"><rect x="0" y="0" width="61" height="1" fill="#196B24"/><rect x="0" y="9" width="61" height="1" fill="#196B24"/><rect x="0" y="45" width="61" height="1" fill="#196B24"/><path d="M3 4.5 h7M15 4.5 h7M27 4.5 h7M39 4.5 h7M51 4.5 h7" stroke="#12501b" stroke-width="1.2" fill="none"/><path d="M3 13.5 h7M15 13.5 h7M27 13.5 h7M39 13.5 h7M51 13.5 h7" stroke="#12501b" stroke-width="1.2" fill="none"/><path d="M3 22.5 h7M15 22.5 h7M27 22.5 h7M39 22.5 h7M51 22.5 h7" stroke="#12501b" stroke-width="1.2" fill="none"/><path d="M3 31.5 h7M15 31.5 h7M27 31.5 h7M39 31.5 h7M51 31.5 h7" stroke="#12501b" stroke-width="1.2" fill="none"/><path d="M3 40.5 h7M15 40.5 h7M27 40.5 h7M39 40.5 h7M51 40.5 h7" stroke="#12501b" stroke-width="1.2" fill="none"/></g><g transform="translate(918,216)"><rect x="0" y="0" width="61" height="1" fill="#0F9ED5"/><rect x="0" y="9" width="61" height="1" fill="#0F9ED5"/><rect x="0" y="45" width="61" height="1" fill="#0F9ED5"/><path d="M3 4.5 h7M15 4.5 h7M27 4.5 h7M39 4.5 h7M51 4.5 h7" stroke="#0b769f" stroke-width="1.2" fill="none"/><path d="M3 13.5 h7M15 13.5 h7M27 13.5 h7M39 13.5 h7M51 13.5 h7" stroke="#0b769f" stroke-width="1.2" fill="none"/><path d="M3 22.5 h7M15 22.5 h7M27 22.5 h7M39 22.5 h7M51 22.5 h7" stroke="#0b769f" stroke-width="1.2" fill="none"/><path d="M3 31.5 h7M15 31.5 h7M27 31.5 h7M39 31.5 h7M51 31.5 h7" stroke="#0b769f" stroke-width="1.2" fill="none"/><path d="M3 40.5 h7M15 40.5 h7M27 40.5 h7M39 40.5 h7M51 40.5 h7" stroke="#0b769f" stroke-width="1.2" fill="none"/></g><g transform="translate(987,216)"><rect x="0" y="0" width="61" height="1" fill="#A02B93"/><rect x="0" y="9" width="61" height="1" fill="#A02B93"/><rect x="0" y="45" width="61" height="1" fill="#A02B93"/><path d="M3 4.5 h7M15 4.5 h7M27 4.5 h7M39 4.5 h7M51 4.5 h7" stroke="#78206e" stroke-width="1.2" fill="none"/><path d="M3 13.5 h7M15 13.5 h7M27 13.5 h7M39 13.5 h7M51 13.5 h7" stroke="#78206e" stroke-width="1.2" fill="none"/><path d="M3 22.5 h7M15 22.5 h7M27 22.5 h7M39 22.5 h7M51 22.5 h7" stroke="#78206e" stroke-width="1.2" fill="none"/><path d="M3 31.5 h7M15 31.5 h7M27 31.5 h7M39 31.5 h7M51 31.5 h7" stroke="#78206e" stroke-width="1.2" fill="none"/><path d="M3 40.5 h7M15 40.5 h7M27 40.5 h7M39 40.5 h7M51 40.5 h7" stroke="#78206e" stroke-width="1.2" fill="none"/></g><g transform="translate(573,270)"><rect x="0" y="0" width="61" height="1" fill="#4EA72E"/><rect x="0" y="9" width="61" height="1" fill="#4EA72E"/><rect x="0" y="45" width="61" height="1" fill="#4EA72E"/><path d="M3 4.5 h7M15 4.5 h7M27 4.5 h7M39 4.5 h7M51 4.5 h7" stroke="#3a7d22" stroke-width="1.2" fill="none"/><path d="M3 13.5 h7M15 13.5 h7M27 13.5 h7M39 13.5 h7M51 13.5 h7" stroke="#3a7d22" stroke-width="1.2" fill="none"/><path d="M3 22.5 h7M15 22.5 h7M27 22.5 h7M39 22.5 h7M51 22.5 h7" stroke="#3a7d22" stroke-width="1.2" fill="none"/><path d="M3 31.5 h7M15 31.5 h7M27 31.5 h7M39 31.5 h7M51 31.5 h7" stroke="#3a7d22" stroke-width="1.2" fill="none"/><path d="M3 40.5 h7M15 40.5 h7M27 40.5 h7M39 40.5 h7M51 40.5 h7" stroke="#3a7d22" stroke-width="1.2" fill="none"/></g><g transform="translate(642,270)"><rect x="0" y="0" width="61" height="10" fill="#000000"/><rect x="0" y="45" width="61" height="1" fill="#000000"/><rect x="0" y="0" width="1" height="46" fill="#000000"/><rect x="60" y="0" width="1" height="46" fill="#000000"/><path d="M3 4.5 h7M15 4.5 h7M27 4.5 h7M39 4.5 h7M51 4.5 h7" stroke="#fff" stroke-width="1.2" fill="none"/><path d="M3 13.5 h7M15 13.5 h7M27 13.5 h7M39 13.5 h7M51 13.5 h7" stroke="#000" stroke-width="1.2" fill="none"/><path d="M3 22.5 h7M15 22.5 h7M27 22.5 h7M39 22.5 h7M51 22.5 h7" stroke="#000" stroke-width="1.2" fill="none"/><path d="M3 31.5 h7M15 31.5 h7M27 31.5 h7M39 31.5 h7M51 31.5 h7" stroke="#000" stroke-width="1.2" fill="none"/><path d="M3 40.5 h7M15 40.5 h7M27 40.5 h7M39 40.5 h7M51 40.5 h7" stroke="#000" stroke-width="1.2" fill="none"/></g><g transform="translate(711,270)"><rect x="0" y="0" width="61" height="10" fill="#156082"/><rect x="0" y="45" width="61" height="1" fill="#156082"/><rect x="0" y="0" width="1" height="46" fill="#156082"/><rect x="60" y="0" width="1" height="46" fill="#156082"/><path d="M3 4.5 h7M15 4.5 h7M27 4.5 h7M39 4.5 h7M51 4.5 h7" stroke="#fff" stroke-width="1.2" fill="none"/><path d="M3 13.5 h7M15 13.5 h7M27 13.5 h7M39 13.5 h7M51 13.5 h7" stroke="#000" stroke-width="1.2" fill="none"/><path d="M3 22.5 h7M15 22.5 h7M27 22.5 h7M39 22.5 h7M51 22.5 h7" stroke="#000" stroke-width="1.2" fill="none"/><path d="M3 31.5 h7M15 31.5 h7M27 31.5 h7M39 31.5 h7M51 31.5 h7" stroke="#000" stroke-width="1.2" fill="none"/><path d="M3 40.5 h7M15 40.5 h7M27 40.5 h7M39 40.5 h7M51 40.5 h7" stroke="#000" stroke-width="1.2" fill="none"/></g><g transform="translate(780,270)"><rect x="0" y="0" width="61" height="10" fill="#E97132"/><rect x="0" y="45" width="61" height="1" fill="#E97132"/><rect x="0" y="0" width="1" height="46" fill="#E97132"/><rect x="60" y="0" width="1" height="46" fill="#E97132"/><path d="M3 4.5 h7M15 4.5 h7M27 4.5 h7M39 4.5 h7M51 4.5 h7" stroke="#fff" stroke-width="1.2" fill="none"/><path d="M3 13.5 h7M15 13.5 h7M27 13.5 h7M39 13.5 h7M51 13.5 h7" stroke="#000" stroke-width="1.2" fill="none"/><path d="M3 22.5 h7M15 22.5 h7M27 22.5 h7M39 22.5 h7M51 22.5 h7" stroke="#000" stroke-width="1.2" fill="none"/><path d="M3 31.5 h7M15 31.5 h7M27 31.5 h7M39 31.5 h7M51 31.5 h7" stroke="#000" stroke-width="1.2" fill="none"/><path d="M3 40.5 h7M15 40.5 h7M27 40.5 h7M39 40.5 h7M51 40.5 h7" stroke="#000" stroke-width="1.2" fill="none"/></g><g transform="translate(849,270)"><rect x="0" y="0" width="61" height="10" fill="#196B24"/><rect x="0" y="45" width="61" height="1" fill="#196B24"/><rect x="0" y="0" width="1" height="46" fill="#196B24"/><rect x="60" y="0" width="1" height="46" fill="#196B24"/><path d="M3 4.5 h7M15 4.5 h7M27 4.5 h7M39 4.5 h7M51 4.5 h7" stroke="#fff" stroke-width="1.2" fill="none"/><path d="M3 13.5 h7M15 13.5 h7M27 13.5 h7M39 13.5 h7M51 13.5 h7" stroke="#000" stroke-width="1.2" fill="none"/><path d="M3 22.5 h7M15 22.5 h7M27 22.5 h7M39 22.5 h7M51 22.5 h7" stroke="#000" stroke-width="1.2" fill="none"/><path d="M3 31.5 h7M15 31.5 h7M27 31.5 h7M39 31.5 h7M51 31.5 h7" stroke="#000" stroke-width="1.2" fill="none"/><path d="M3 40.5 h7M15 40.5 h7M27 40.5 h7M39 40.5 h7M51 40.5 h7" stroke="#000" stroke-width="1.2" fill="none"/></g><g transform="translate(918,270)"><rect x="0" y="0" width="61" height="10" fill="#0F9ED5"/><rect x="0" y="45" width="61" height="1" fill="#0F9ED5"/><rect x="0" y="0" width="1" height="46" fill="#0F9ED5"/><rect x="60" y="0" width="1" height="46" fill="#0F9ED5"/><path d="M3 4.5 h7M15 4.5 h7M27 4.5 h7M39 4.5 h7M51 4.5 h7" stroke="#fff" stroke-width="1.2" fill="none"/><path d="M3 13.5 h7M15 13.5 h7M27 13.5 h7M39 13.5 h7M51 13.5 h7" stroke="#000" stroke-width="1.2" fill="none"/><path d="M3 22.5 h7M15 22.5 h7M27 22.5 h7M39 22.5 h7M51 22.5 h7" stroke="#000" stroke-width="1.2" fill="none"/><path d="M3 31.5 h7M15 31.5 h7M27 31.5 h7M39 31.5 h7M51 31.5 h7" stroke="#000" stroke-width="1.2" fill="none"/><path d="M3 40.5 h7M15 40.5 h7M27 40.5 h7M39 40.5 h7M51 40.5 h7" stroke="#000" stroke-width="1.2" fill="none"/></g><g transform="translate(987,270)"><rect x="0" y="0" width="61" height="10" fill="#A02B93"/><rect x="0" y="45" width="61" height="1" fill="#A02B93"/><rect x="0" y="0" width="1" height="46" fill="#A02B93"/><rect x="60" y="0" width="1" height="46" fill="#A02B93"/><path d="M3 4.5 h7M15 4.5 h7M27 4.5 h7M39 4.5 h7M51 4.5 h7" stroke="#fff" stroke-width="1.2" fill="none"/><path d="M3 13.5 h7M15 13.5 h7M27 13.5 h7M39 13.5 h7M51 13.5 h7" stroke="#000" stroke-width="1.2" fill="none"/><path d="M3 22.5 h7M15 22.5 h7M27 22.5 h7M39 22.5 h7M51 22.5 h7" stroke="#000" stroke-width="1.2" fill="none"/><path d="M3 31.5 h7M15 31.5 h7M27 31.5 h7M39 31.5 h7M51 31.5 h7" stroke="#000" stroke-width="1.2" fill="none"/><path d="M3 40.5 h7M15 40.5 h7M27 40.5 h7M39 40.5 h7M51 40.5 h7" stroke="#000" stroke-width="1.2" fill="none"/></g><g transform="translate(573,324)"><rect x="0" y="0" width="61" height="10" fill="#4EA72E"/><rect x="0" y="45" width="61" height="1" fill="#4EA72E"/><rect x="0" y="0" width="1" height="46" fill="#4EA72E"/><rect x="60" y="0" width="1" height="46" fill="#4EA72E"/><path d="M3 4.5 h7M15 4.5 h7M27 4.5 h7M39 4.5 h7M51 4.5 h7" stroke="#fff" stroke-width="1.2" fill="none"/><path d="M3 13.5 h7M15 13.5 h7M27 13.5 h7M39 13.5 h7M51 13.5 h7" stroke="#000" stroke-width="1.2" fill="none"/><path d="M3 22.5 h7M15 22.5 h7M27 22.5 h7M39 22.5 h7M51 22.5 h7" stroke="#000" stroke-width="1.2" fill="none"/><path d="M3 31.5 h7M15 31.5 h7M27 31.5 h7M39 31.5 h7M51 31.5 h7" stroke="#000" stroke-width="1.2" fill="none"/><path d="M3 40.5 h7M15 40.5 h7M27 40.5 h7M39 40.5 h7M51 40.5 h7" stroke="#000" stroke-width="1.2" fill="none"/></g><g transform="translate(642,324)"><rect x="0" y="0" width="61" height="1" fill="#000000"/><rect x="0" y="9" width="61" height="1" fill="#000000"/><rect x="0" y="18" width="61" height="1" fill="#000000"/><rect x="0" y="27" width="61" height="1" fill="#000000"/><rect x="0" y="36" width="61" height="1" fill="#000000"/><rect x="0" y="45" width="61" height="1" fill="#000000"/><rect x="0" y="0" width="1" height="46" fill="#000000"/><rect x="12" y="0" width="1" height="46" fill="#000000"/><rect x="24" y="0" width="1" height="46" fill="#000000"/><rect x="36" y="0" width="1" height="46" fill="#000000"/><rect x="48" y="0" width="1" height="46" fill="#000000"/><rect x="60" y="0" width="1" height="46" fill="#000000"/><path d="M3 4.5 h7M15 4.5 h7M27 4.5 h7M39 4.5 h7M51 4.5 h7" stroke="#000" stroke-width="1.2" fill="none"/><path d="M3 13.5 h7M15 13.5 h7M27 13.5 h7M39 13.5 h7M51 13.5 h7" stroke="#000" stroke-width="1.2" fill="none"/><path d="M3 22.5 h7M15 22.5 h7M27 22.5 h7M39 22.5 h7M51 22.5 h7" stroke="#000" stroke-width="1.2" fill="none"/><path d="M3 31.5 h7M15 31.5 h7M27 31.5 h7M39 31.5 h7M51 31.5 h7" stroke="#000" stroke-width="1.2" fill="none"/><path d="M3 40.5 h7M15 40.5 h7M27 40.5 h7M39 40.5 h7M51 40.5 h7" stroke="#000" stroke-width="1.2" fill="none"/></g><g transform="translate(711,324)"><rect x="0" y="0" width="61" height="1" fill="#156082"/><rect x="0" y="9" width="61" height="1" fill="#156082"/><rect x="0" y="18" width="61" height="1" fill="#156082"/><rect x="0" y="27" width="61" height="1" fill="#156082"/><rect x="0" y="36" width="61" height="1" fill="#156082"/><rect x="0" y="45" width="61" height="1" fill="#156082"/><rect x="0" y="0" width="1" height="46" fill="#156082"/><rect x="12" y="0" width="1" height="46" fill="#156082"/><rect x="24" y="0" width="1" height="46" fill="#156082"/><rect x="36" y="0" width="1" height="46" fill="#156082"/><rect x="48" y="0" width="1" height="46" fill="#156082"/><rect x="60" y="0" width="1" height="46" fill="#156082"/><path d="M3 4.5 h7M15 4.5 h7M27 4.5 h7M39 4.5 h7M51 4.5 h7" stroke="#000" stroke-width="1.2" fill="none"/><path d="M3 13.5 h7M15 13.5 h7M27 13.5 h7M39 13.5 h7M51 13.5 h7" stroke="#000" stroke-width="1.2" fill="none"/><path d="M3 22.5 h7M15 22.5 h7M27 22.5 h7M39 22.5 h7M51 22.5 h7" stroke="#000" stroke-width="1.2" fill="none"/><path d="M3 31.5 h7M15 31.5 h7M27 31.5 h7M39 31.5 h7M51 31.5 h7" stroke="#000" stroke-width="1.2" fill="none"/><path d="M3 40.5 h7M15 40.5 h7M27 40.5 h7M39 40.5 h7M51 40.5 h7" stroke="#000" stroke-width="1.2" fill="none"/></g><g transform="translate(780,324)"><rect x="0" y="0" width="61" height="1" fill="#E97132"/><rect x="0" y="9" width="61" height="1" fill="#E97132"/><rect x="0" y="18" width="61" height="1" fill="#E97132"/><rect x="0" y="27" width="61" height="1" fill="#E97132"/><rect x="0" y="36" width="61" height="1" fill="#E97132"/><rect x="0" y="45" width="61" height="1" fill="#E97132"/><rect x="0" y="0" width="1" height="46" fill="#E97132"/><rect x="12" y="0" width="1" height="46" fill="#E97132"/><rect x="24" y="0" width="1" height="46" fill="#E97132"/><rect x="36" y="0" width="1" height="46" fill="#E97132"/><rect x="48" y="0" width="1" height="46" fill="#E97132"/><rect x="60" y="0" width="1" height="46" fill="#E97132"/><path d="M3 4.5 h7M15 4.5 h7M27 4.5 h7M39 4.5 h7M51 4.5 h7" stroke="#000" stroke-width="1.2" fill="none"/><path d="M3 13.5 h7M15 13.5 h7M27 13.5 h7M39 13.5 h7M51 13.5 h7" stroke="#000" stroke-width="1.2" fill="none"/><path d="M3 22.5 h7M15 22.5 h7M27 22.5 h7M39 22.5 h7M51 22.5 h7" stroke="#000" stroke-width="1.2" fill="none"/><path d="M3 31.5 h7M15 31.5 h7M27 31.5 h7M39 31.5 h7M51 31.5 h7" stroke="#000" stroke-width="1.2" fill="none"/><path d="M3 40.5 h7M15 40.5 h7M27 40.5 h7M39 40.5 h7M51 40.5 h7" stroke="#000" stroke-width="1.2" fill="none"/></g><g transform="translate(849,324)"><rect x="0" y="0" width="61" height="1" fill="#196B24"/><rect x="0" y="9" width="61" height="1" fill="#196B24"/><rect x="0" y="18" width="61" height="1" fill="#196B24"/><rect x="0" y="27" width="61" height="1" fill="#196B24"/><rect x="0" y="36" width="61" height="1" fill="#196B24"/><rect x="0" y="45" width="61" height="1" fill="#196B24"/><rect x="0" y="0" width="1" height="46" fill="#196B24"/><rect x="12" y="0" width="1" height="46" fill="#196B24"/><rect x="24" y="0" width="1" height="46" fill="#196B24"/><rect x="36" y="0" width="1" height="46" fill="#196B24"/><rect x="48" y="0" width="1" height="46" fill="#196B24"/><rect x="60" y="0" width="1" height="46" fill="#196B24"/><path d="M3 4.5 h7M15 4.5 h7M27 4.5 h7M39 4.5 h7M51 4.5 h7" stroke="#000" stroke-width="1.2" fill="none"/><path d="M3 13.5 h7M15 13.5 h7M27 13.5 h7M39 13.5 h7M51 13.5 h7" stroke="#000" stroke-width="1.2" fill="none"/><path d="M3 22.5 h7M15 22.5 h7M27 22.5 h7M39 22.5 h7M51 22.5 h7" stroke="#000" stroke-width="1.2" fill="none"/><path d="M3 31.5 h7M15 31.5 h7M27 31.5 h7M39 31.5 h7M51 31.5 h7" stroke="#000" stroke-width="1.2" fill="none"/><path d="M3 40.5 h7M15 40.5 h7M27 40.5 h7M39 40.5 h7M51 40.5 h7" stroke="#000" stroke-width="1.2" fill="none"/></g><g transform="translate(918,324)"><rect x="0" y="0" width="61" height="1" fill="#0F9ED5"/><rect x="0" y="9" width="61" height="1" fill="#0F9ED5"/><rect x="0" y="18" width="61" height="1" fill="#0F9ED5"/><rect x="0" y="27" width="61" height="1" fill="#0F9ED5"/><rect x="0" y="36" width="61" height="1" fill="#0F9ED5"/><rect x="0" y="45" width="61" height="1" fill="#0F9ED5"/><rect x="0" y="0" width="1" height="46" fill="#0F9ED5"/><rect x="12" y="0" width="1" height="46" fill="#0F9ED5"/><rect x="24" y="0" width="1" height="46" fill="#0F9ED5"/><rect x="36" y="0" width="1" height="46" fill="#0F9ED5"/><rect x="48" y="0" width="1" height="46" fill="#0F9ED5"/><rect x="60" y="0" width="1" height="46" fill="#0F9ED5"/><path d="M3 4.5 h7M15 4.5 h7M27 4.5 h7M39 4.5 h7M51 4.5 h7" stroke="#000" stroke-width="1.2" fill="none"/><path d="M3 13.5 h7M15 13.5 h7M27 13.5 h7M39 13.5 h7M51 13.5 h7" stroke="#000" stroke-width="1.2" fill="none"/><path d="M3 22.5 h7M15 22.5 h7M27 22.5 h7M39 22.5 h7M51 22.5 h7" stroke="#000" stroke-width="1.2" fill="none"/><path d="M3 31.5 h7M15 31.5 h7M27 31.5 h7M39 31.5 h7M51 31.5 h7" stroke="#000" stroke-width="1.2" fill="none"/><path d="M3 40.5 h7M15 40.5 h7M27 40.5 h7M39 40.5 h7M51 40.5 h7" stroke="#000" stroke-width="1.2" fill="none"/></g><g transform="translate(987,324)"><rect x="0" y="0" width="61" height="1" fill="#A02B93"/><rect x="0" y="9" width="61" height="1" fill="#A02B93"/><rect x="0" y="18" width="61" height="1" fill="#A02B93"/><rect x="0" y="27" width="61" height="1" fill="#A02B93"/><rect x="0" y="36" width="61" height="1" fill="#A02B93"/><rect x="0" y="45" width="61" height="1" fill="#A02B93"/><rect x="0" y="0" width="1" height="46" fill="#A02B93"/><rect x="12" y="0" width="1" height="46" fill="#A02B93"/><rect x="24" y="0" width="1" height="46" fill="#A02B93"/><rect x="36" y="0" width="1" height="46" fill="#A02B93"/><rect x="48" y="0" width="1" height="46" fill="#A02B93"/><rect x="60" y="0" width="1" height="46" fill="#A02B93"/><path d="M3 4.5 h7M15 4.5 h7M27 4.5 h7M39 4.5 h7M51 4.5 h7" stroke="#000" stroke-width="1.2" fill="none"/><path d="M3 13.5 h7M15 13.5 h7M27 13.5 h7M39 13.5 h7M51 13.5 h7" stroke="#000" stroke-width="1.2" fill="none"/><path d="M3 22.5 h7M15 22.5 h7M27 22.5 h7M39 22.5 h7M51 22.5 h7" stroke="#000" stroke-width="1.2" fill="none"/><path d="M3 31.5 h7M15 31.5 h7M27 31.5 h7M39 31.5 h7M51 31.5 h7" stroke="#000" stroke-width="1.2" fill="none"/><path d="M3 40.5 h7M15 40.5 h7M27 40.5 h7M39 40.5 h7M51 40.5 h7" stroke="#000" stroke-width="1.2" fill="none"/></g><g transform="translate(573,378)"><rect x="0" y="0" width="61" height="1" fill="#4EA72E"/><rect x="0" y="9" width="61" height="1" fill="#4EA72E"/><rect x="0" y="18" width="61" height="1" fill="#4EA72E"/><rect x="0" y="27" width="61" height="1" fill="#4EA72E"/><rect x="0" y="36" width="61" height="1" fill="#4EA72E"/><rect x="0" y="45" width="61" height="1" fill="#4EA72E"/><rect x="0" y="0" width="1" height="46" fill="#4EA72E"/><rect x="12" y="0" width="1" height="46" fill="#4EA72E"/><rect x="24" y="0" width="1" height="46" fill="#4EA72E"/><rect x="36" y="0" width="1" height="46" fill="#4EA72E"/><rect x="48" y="0" width="1" height="46" fill="#4EA72E"/><rect x="60" y="0" width="1" height="46" fill="#4EA72E"/><path d="M3 4.5 h7M15 4.5 h7M27 4.5 h7M39 4.5 h7M51 4.5 h7" stroke="#000" stroke-width="1.2" fill="none"/><path d="M3 13.5 h7M15 13.5 h7M27 13.5 h7M39 13.5 h7M51 13.5 h7" stroke="#000" stroke-width="1.2" fill="none"/><path d="M3 22.5 h7M15 22.5 h7M27 22.5 h7M39 22.5 h7M51 22.5 h7" stroke="#000" stroke-width="1.2" fill="none"/><path d="M3 31.5 h7M15 31.5 h7M27 31.5 h7M39 31.5 h7M51 31.5 h7" stroke="#000" stroke-width="1.2" fill="none"/><path d="M3 40.5 h7M15 40.5 h7M27 40.5 h7M39 40.5 h7M51 40.5 h7" stroke="#000" stroke-width="1.2" fill="none"/></g><g transform="translate(573,471)"><rect x="0" y="18" width="61" height="1" fill="#000000"/><rect x="0" y="27" width="61" height="1" fill="#000000"/><rect x="0" y="36" width="61" height="1" fill="#000000"/><rect x="0" y="45" width="61" height="1" fill="#000000"/><rect x="0" y="0" width="1" height="46" fill="#000000"/><rect x="60" y="0" width="1" height="46" fill="#000000"/><rect x="0" y="0" width="61" height="10" fill="#000000"/><path d="M3 4.5 h7M15 4.5 h7M27 4.5 h7M39 4.5 h7M51 4.5 h7" stroke="#fff" stroke-width="1.2" fill="none"/><path d="M3 13.5 h7M15 13.5 h7M27 13.5 h7M39 13.5 h7M51 13.5 h7" stroke="#000" stroke-width="1.2" fill="none"/><path d="M3 22.5 h7M15 22.5 h7M27 22.5 h7M39 22.5 h7M51 22.5 h7" stroke="#000" stroke-width="1.2" fill="none"/><path d="M3 31.5 h7M15 31.5 h7M27 31.5 h7M39 31.5 h7M51 31.5 h7" stroke="#000" stroke-width="1.2" fill="none"/><path d="M3 40.5 h7M15 40.5 h7M27 40.5 h7M39 40.5 h7M51 40.5 h7" stroke="#000" stroke-width="1.2" fill="none"/></g><g transform="translate(642,471)"><rect x="0" y="18" width="61" height="1" fill="#46B1E1"/><rect x="0" y="27" width="61" height="1" fill="#46B1E1"/><rect x="0" y="36" width="61" height="1" fill="#46B1E1"/><rect x="0" y="45" width="61" height="1" fill="#46B1E1"/><rect x="0" y="0" width="1" height="46" fill="#46B1E1"/><rect x="60" y="0" width="1" height="46" fill="#46B1E1"/><rect x="0" y="0" width="61" height="10" fill="#156082"/><path d="M3 4.5 h7M15 4.5 h7M27 4.5 h7M39 4.5 h7M51 4.5 h7" stroke="#fff" stroke-width="1.2" fill="none"/><path d="M3 13.5 h7M15 13.5 h7M27 13.5 h7M39 13.5 h7M51 13.5 h7" stroke="#000" stroke-width="1.2" fill="none"/><path d="M3 22.5 h7M15 22.5 h7M27 22.5 h7M39 22.5 h7M51 22.5 h7" stroke="#000" stroke-width="1.2" fill="none"/><path d="M3 31.5 h7M15 31.5 h7M27 31.5 h7M39 31.5 h7M51 31.5 h7" stroke="#000" stroke-width="1.2" fill="none"/><path d="M3 40.5 h7M15 40.5 h7M27 40.5 h7M39 40.5 h7M51 40.5 h7" stroke="#000" stroke-width="1.2" fill="none"/></g><g transform="translate(711,471)"><rect x="0" y="18" width="61" height="1" fill="#F2AA84"/><rect x="0" y="27" width="61" height="1" fill="#F2AA84"/><rect x="0" y="36" width="61" height="1" fill="#F2AA84"/><rect x="0" y="45" width="61" height="1" fill="#F2AA84"/><rect x="0" y="0" width="1" height="46" fill="#F2AA84"/><rect x="60" y="0" width="1" height="46" fill="#F2AA84"/><rect x="0" y="0" width="61" height="10" fill="#E97132"/><path d="M3 4.5 h7M15 4.5 h7M27 4.5 h7M39 4.5 h7M51 4.5 h7" stroke="#fff" stroke-width="1.2" fill="none"/><path d="M3 13.5 h7M15 13.5 h7M27 13.5 h7M39 13.5 h7M51 13.5 h7" stroke="#000" stroke-width="1.2" fill="none"/><path d="M3 22.5 h7M15 22.5 h7M27 22.5 h7M39 22.5 h7M51 22.5 h7" stroke="#000" stroke-width="1.2" fill="none"/><path d="M3 31.5 h7M15 31.5 h7M27 31.5 h7M39 31.5 h7M51 31.5 h7" stroke="#000" stroke-width="1.2" fill="none"/><path d="M3 40.5 h7M15 40.5 h7M27 40.5 h7M39 40.5 h7M51 40.5 h7" stroke="#000" stroke-width="1.2" fill="none"/></g><g transform="translate(780,471)"><rect x="0" y="18" width="61" height="1" fill="#47D45A"/><rect x="0" y="27" width="61" height="1" fill="#47D45A"/><rect x="0" y="36" width="61" height="1" fill="#47D45A"/><rect x="0" y="45" width="61" height="1" fill="#47D45A"/><rect x="0" y="0" width="1" height="46" fill="#47D45A"/><rect x="60" y="0" width="1" height="46" fill="#47D45A"/><rect x="0" y="0" width="61" height="10" fill="#196B24"/><path d="M3 4.5 h7M15 4.5 h7M27 4.5 h7M39 4.5 h7M51 4.5 h7" stroke="#fff" stroke-width="1.2" fill="none"/><path d="M3 13.5 h7M15 13.5 h7M27 13.5 h7M39 13.5 h7M51 13.5 h7" stroke="#000" stroke-width="1.2" fill="none"/><path d="M3 22.5 h7M15 22.5 h7M27 22.5 h7M39 22.5 h7M51 22.5 h7" stroke="#000" stroke-width="1.2" fill="none"/><path d="M3 31.5 h7M15 31.5 h7M27 31.5 h7M39 31.5 h7M51 31.5 h7" stroke="#000" stroke-width="1.2" fill="none"/><path d="M3 40.5 h7M15 40.5 h7M27 40.5 h7M39 40.5 h7M51 40.5 h7" stroke="#000" stroke-width="1.2" fill="none"/></g><g transform="translate(849,471)"><rect x="0" y="18" width="61" height="1" fill="#61CBF4"/><rect x="0" y="27" width="61" height="1" fill="#61CBF4"/><rect x="0" y="36" width="61" height="1" fill="#61CBF4"/><rect x="0" y="45" width="61" height="1" fill="#61CBF4"/><rect x="0" y="0" width="1" height="46" fill="#61CBF4"/><rect x="60" y="0" width="1" height="46" fill="#61CBF4"/><rect x="0" y="0" width="61" height="10" fill="#0F9ED5"/><path d="M3 4.5 h7M15 4.5 h7M27 4.5 h7M39 4.5 h7M51 4.5 h7" stroke="#fff" stroke-width="1.2" fill="none"/><path d="M3 13.5 h7M15 13.5 h7M27 13.5 h7M39 13.5 h7M51 13.5 h7" stroke="#000" stroke-width="1.2" fill="none"/><path d="M3 22.5 h7M15 22.5 h7M27 22.5 h7M39 22.5 h7M51 22.5 h7" stroke="#000" stroke-width="1.2" fill="none"/><path d="M3 31.5 h7M15 31.5 h7M27 31.5 h7M39 31.5 h7M51 31.5 h7" stroke="#000" stroke-width="1.2" fill="none"/><path d="M3 40.5 h7M15 40.5 h7M27 40.5 h7M39 40.5 h7M51 40.5 h7" stroke="#000" stroke-width="1.2" fill="none"/></g><g transform="translate(918,471)"><rect x="0" y="18" width="61" height="1" fill="#D86ECC"/><rect x="0" y="27" width="61" height="1" fill="#D86ECC"/><rect x="0" y="36" width="61" height="1" fill="#D86ECC"/><rect x="0" y="45" width="61" height="1" fill="#D86ECC"/><rect x="0" y="0" width="1" height="46" fill="#D86ECC"/><rect x="60" y="0" width="1" height="46" fill="#D86ECC"/><rect x="0" y="0" width="61" height="10" fill="#A02B93"/><path d="M3 4.5 h7M15 4.5 h7M27 4.5 h7M39 4.5 h7M51 4.5 h7" stroke="#fff" stroke-width="1.2" fill="none"/><path d="M3 13.5 h7M15 13.5 h7M27 13.5 h7M39 13.5 h7M51 13.5 h7" stroke="#000" stroke-width="1.2" fill="none"/><path d="M3 22.5 h7M15 22.5 h7M27 22.5 h7M39 22.5 h7M51 22.5 h7" stroke="#000" stroke-width="1.2" fill="none"/><path d="M3 31.5 h7M15 31.5 h7M27 31.5 h7M39 31.5 h7M51 31.5 h7" stroke="#000" stroke-width="1.2" fill="none"/><path d="M3 40.5 h7M15 40.5 h7M27 40.5 h7M39 40.5 h7M51 40.5 h7" stroke="#000" stroke-width="1.2" fill="none"/></g><g transform="translate(987,471)"><rect x="0" y="18" width="61" height="1" fill="#8ED973"/><rect x="0" y="27" width="61" height="1" fill="#8ED973"/><rect x="0" y="36" width="61" height="1" fill="#8ED973"/><rect x="0" y="45" width="61" height="1" fill="#8ED973"/><rect x="0" y="0" width="1" height="46" fill="#8ED973"/><rect x="60" y="0" width="1" height="46" fill="#8ED973"/><rect x="0" y="0" width="61" height="10" fill="#4EA72E"/><path d="M3 4.5 h7M15 4.5 h7M27 4.5 h7M39 4.5 h7M51 4.5 h7" stroke="#fff" stroke-width="1.2" fill="none"/><path d="M3 13.5 h7M15 13.5 h7M27 13.5 h7M39 13.5 h7M51 13.5 h7" stroke="#000" stroke-width="1.2" fill="none"/><path d="M3 22.5 h7M15 22.5 h7M27 22.5 h7M39 22.5 h7M51 22.5 h7" stroke="#000" stroke-width="1.2" fill="none"/><path d="M3 31.5 h7M15 31.5 h7M27 31.5 h7M39 31.5 h7M51 31.5 h7" stroke="#000" stroke-width="1.2" fill="none"/><path d="M3 40.5 h7M15 40.5 h7M27 40.5 h7M39 40.5 h7M51 40.5 h7" stroke="#000" stroke-width="1.2" fill="none"/></g><g transform="translate(573,525)"><rect x="0" y="0" width="61" height="9" fill="#000000"/><rect x="0" y="10" width="61" height="36" fill="#D9D9D9"/><rect x="0" y="18" width="61" height="1" fill="#fff"/><rect x="0" y="27" width="61" height="1" fill="#fff"/><rect x="0" y="36" width="61" height="1" fill="#fff"/><rect x="12" y="0" width="1" height="46" fill="#fff"/><rect x="24" y="0" width="1" height="46" fill="#fff"/><rect x="36" y="0" width="1" height="46" fill="#fff"/><rect x="48" y="0" width="1" height="46" fill="#fff"/><path d="M3 4.5 h7M15 4.5 h7M27 4.5 h7M39 4.5 h7M51 4.5 h7" stroke="#fff" stroke-width="1.2" fill="none"/><path d="M3 13.5 h7M15 13.5 h7M27 13.5 h7M39 13.5 h7M51 13.5 h7" stroke="#000" stroke-width="1.2" fill="none"/><path d="M3 22.5 h7M15 22.5 h7M27 22.5 h7M39 22.5 h7M51 22.5 h7" stroke="#000" stroke-width="1.2" fill="none"/><path d="M3 31.5 h7M15 31.5 h7M27 31.5 h7M39 31.5 h7M51 31.5 h7" stroke="#000" stroke-width="1.2" fill="none"/><path d="M3 40.5 h7M15 40.5 h7M27 40.5 h7M39 40.5 h7M51 40.5 h7" stroke="#000" stroke-width="1.2" fill="none"/></g><g transform="translate(642,525)"><rect x="0" y="0" width="61" height="9" fill="#156082"/><rect x="0" y="10" width="61" height="36" fill="#C1E4F5"/><rect x="0" y="18" width="61" height="1" fill="#fff"/><rect x="0" y="27" width="61" height="1" fill="#fff"/><rect x="0" y="36" width="61" height="1" fill="#fff"/><rect x="12" y="0" width="1" height="46" fill="#fff"/><rect x="24" y="0" width="1" height="46" fill="#fff"/><rect x="36" y="0" width="1" height="46" fill="#fff"/><rect x="48" y="0" width="1" height="46" fill="#fff"/><path d="M3 4.5 h7M15 4.5 h7M27 4.5 h7M39 4.5 h7M51 4.5 h7" stroke="#fff" stroke-width="1.2" fill="none"/><path d="M3 13.5 h7M15 13.5 h7M27 13.5 h7M39 13.5 h7M51 13.5 h7" stroke="#000" stroke-width="1.2" fill="none"/><path d="M3 22.5 h7M15 22.5 h7M27 22.5 h7M39 22.5 h7M51 22.5 h7" stroke="#000" stroke-width="1.2" fill="none"/><path d="M3 31.5 h7M15 31.5 h7M27 31.5 h7M39 31.5 h7M51 31.5 h7" stroke="#000" stroke-width="1.2" fill="none"/><path d="M3 40.5 h7M15 40.5 h7M27 40.5 h7M39 40.5 h7M51 40.5 h7" stroke="#000" stroke-width="1.2" fill="none"/></g><g transform="translate(711,525)"><rect x="0" y="0" width="61" height="9" fill="#E97132"/><rect x="0" y="10" width="61" height="36" fill="#FBE3D6"/><rect x="0" y="18" width="61" height="1" fill="#fff"/><rect x="0" y="27" width="61" height="1" fill="#fff"/><rect x="0" y="36" width="61" height="1" fill="#fff"/><rect x="12" y="0" width="1" height="46" fill="#fff"/><rect x="24" y="0" width="1" height="46" fill="#fff"/><rect x="36" y="0" width="1" height="46" fill="#fff"/><rect x="48" y="0" width="1" height="46" fill="#fff"/><path d="M3 4.5 h7M15 4.5 h7M27 4.5 h7M39 4.5 h7M51 4.5 h7" stroke="#fff" stroke-width="1.2" fill="none"/><path d="M3 13.5 h7M15 13.5 h7M27 13.5 h7M39 13.5 h7M51 13.5 h7" stroke="#000" stroke-width="1.2" fill="none"/><path d="M3 22.5 h7M15 22.5 h7M27 22.5 h7M39 22.5 h7M51 22.5 h7" stroke="#000" stroke-width="1.2" fill="none"/><path d="M3 31.5 h7M15 31.5 h7M27 31.5 h7M39 31.5 h7M51 31.5 h7" stroke="#000" stroke-width="1.2" fill="none"/><path d="M3 40.5 h7M15 40.5 h7M27 40.5 h7M39 40.5 h7M51 40.5 h7" stroke="#000" stroke-width="1.2" fill="none"/></g><g transform="translate(780,525)"><rect x="0" y="0" width="61" height="9" fill="#196B24"/><rect x="0" y="10" width="61" height="36" fill="#C1F0C8"/><rect x="0" y="18" width="61" height="1" fill="#fff"/><rect x="0" y="27" width="61" height="1" fill="#fff"/><rect x="0" y="36" width="61" height="1" fill="#fff"/><rect x="12" y="0" width="1" height="46" fill="#fff"/><rect x="24" y="0" width="1" height="46" fill="#fff"/><rect x="36" y="0" width="1" height="46" fill="#fff"/><rect x="48" y="0" width="1" height="46" fill="#fff"/><path d="M3 4.5 h7M15 4.5 h7M27 4.5 h7M39 4.5 h7M51 4.5 h7" stroke="#fff" stroke-width="1.2" fill="none"/><path d="M3 13.5 h7M15 13.5 h7M27 13.5 h7M39 13.5 h7M51 13.5 h7" stroke="#000" stroke-width="1.2" fill="none"/><path d="M3 22.5 h7M15 22.5 h7M27 22.5 h7M39 22.5 h7M51 22.5 h7" stroke="#000" stroke-width="1.2" fill="none"/><path d="M3 31.5 h7M15 31.5 h7M27 31.5 h7M39 31.5 h7M51 31.5 h7" stroke="#000" stroke-width="1.2" fill="none"/><path d="M3 40.5 h7M15 40.5 h7M27 40.5 h7M39 40.5 h7M51 40.5 h7" stroke="#000" stroke-width="1.2" fill="none"/></g><g transform="translate(849,525)"><rect x="0" y="0" width="61" height="9" fill="#0F9ED5"/><rect x="0" y="10" width="61" height="36" fill="#CAEEFB"/><rect x="0" y="18" width="61" height="1" fill="#fff"/><rect x="0" y="27" width="61" height="1" fill="#fff"/><rect x="0" y="36" width="61" height="1" fill="#fff"/><rect x="12" y="0" width="1" height="46" fill="#fff"/><rect x="24" y="0" width="1" height="46" fill="#fff"/><rect x="36" y="0" width="1" height="46" fill="#fff"/><rect x="48" y="0" width="1" height="46" fill="#fff"/><path d="M3 4.5 h7M15 4.5 h7M27 4.5 h7M39 4.5 h7M51 4.5 h7" stroke="#fff" stroke-width="1.2" fill="none"/><path d="M3 13.5 h7M15 13.5 h7M27 13.5 h7M39 13.5 h7M51 13.5 h7" stroke="#000" stroke-width="1.2" fill="none"/><path d="M3 22.5 h7M15 22.5 h7M27 22.5 h7M39 22.5 h7M51 22.5 h7" stroke="#000" stroke-width="1.2" fill="none"/><path d="M3 31.5 h7M15 31.5 h7M27 31.5 h7M39 31.5 h7M51 31.5 h7" stroke="#000" stroke-width="1.2" fill="none"/><path d="M3 40.5 h7M15 40.5 h7M27 40.5 h7M39 40.5 h7M51 40.5 h7" stroke="#000" stroke-width="1.2" fill="none"/></g><g transform="translate(918,525)"><rect x="0" y="0" width="61" height="9" fill="#A02B93"/><rect x="0" y="10" width="61" height="36" fill="#F2CFEE"/><rect x="0" y="18" width="61" height="1" fill="#fff"/><rect x="0" y="27" width="61" height="1" fill="#fff"/><rect x="0" y="36" width="61" height="1" fill="#fff"/><rect x="12" y="0" width="1" height="46" fill="#fff"/><rect x="24" y="0" width="1" height="46" fill="#fff"/><rect x="36" y="0" width="1" height="46" fill="#fff"/><rect x="48" y="0" width="1" height="46" fill="#fff"/><path d="M3 4.5 h7M15 4.5 h7M27 4.5 h7M39 4.5 h7M51 4.5 h7" stroke="#fff" stroke-width="1.2" fill="none"/><path d="M3 13.5 h7M15 13.5 h7M27 13.5 h7M39 13.5 h7M51 13.5 h7" stroke="#000" stroke-width="1.2" fill="none"/><path d="M3 22.5 h7M15 22.5 h7M27 22.5 h7M39 22.5 h7M51 22.5 h7" stroke="#000" stroke-width="1.2" fill="none"/><path d="M3 31.5 h7M15 31.5 h7M27 31.5 h7M39 31.5 h7M51 31.5 h7" stroke="#000" stroke-width="1.2" fill="none"/><path d="M3 40.5 h7M15 40.5 h7M27 40.5 h7M39 40.5 h7M51 40.5 h7" stroke="#000" stroke-width="1.2" fill="none"/></g><g transform="translate(987,525)"><rect x="0" y="0" width="61" height="9" fill="#4EA72E"/><rect x="0" y="10" width="61" height="36" fill="#D9F2D0"/><rect x="0" y="18" width="61" height="1" fill="#fff"/><rect x="0" y="27" width="61" height="1" fill="#fff"/><rect x="0" y="36" width="61" height="1" fill="#fff"/><rect x="12" y="0" width="1" height="46" fill="#fff"/><rect x="24" y="0" width="1" height="46" fill="#fff"/><rect x="36" y="0" width="1" height="46" fill="#fff"/><rect x="48" y="0" width="1" height="46" fill="#fff"/><path d="M3 4.5 h7M15 4.5 h7M27 4.5 h7M39 4.5 h7M51 4.5 h7" stroke="#fff" stroke-width="1.2" fill="none"/><path d="M3 13.5 h7M15 13.5 h7M27 13.5 h7M39 13.5 h7M51 13.5 h7" stroke="#000" stroke-width="1.2" fill="none"/><path d="M3 22.5 h7M15 22.5 h7M27 22.5 h7M39 22.5 h7M51 22.5 h7" stroke="#000" stroke-width="1.2" fill="none"/><path d="M3 31.5 h7M15 31.5 h7M27 31.5 h7M39 31.5 h7M51 31.5 h7" stroke="#000" stroke-width="1.2" fill="none"/><path d="M3 40.5 h7M15 40.5 h7M27 40.5 h7M39 40.5 h7M51 40.5 h7" stroke="#000" stroke-width="1.2" fill="none"/></g><g transform="translate(573,579)"><rect x="0" y="18" width="61" height="1" fill="#000000"/><rect x="0" y="27" width="61" height="1" fill="#000000"/><rect x="0" y="36" width="61" height="1" fill="#000000"/><rect x="0" y="45" width="61" height="1" fill="#000000"/><rect x="0" y="0" width="1" height="46" fill="#000000"/><rect x="12" y="0" width="1" height="46" fill="#000000"/><rect x="24" y="0" width="1" height="46" fill="#000000"/><rect x="36" y="0" width="1" height="46" fill="#000000"/><rect x="48" y="0" width="1" height="46" fill="#000000"/><rect x="60" y="0" width="1" height="46" fill="#000000"/><rect x="0" y="0" width="61" height="10" fill="#000000"/><path d="M3 4.5 h7M15 4.5 h7M27 4.5 h7M39 4.5 h7M51 4.5 h7" stroke="#fff" stroke-width="1.2" fill="none"/><path d="M3 13.5 h7M15 13.5 h7M27 13.5 h7M39 13.5 h7M51 13.5 h7" stroke="#000" stroke-width="1.2" fill="none"/><path d="M3 22.5 h7M15 22.5 h7M27 22.5 h7M39 22.5 h7M51 22.5 h7" stroke="#000" stroke-width="1.2" fill="none"/><path d="M3 31.5 h7M15 31.5 h7M27 31.5 h7M39 31.5 h7M51 31.5 h7" stroke="#000" stroke-width="1.2" fill="none"/><path d="M3 40.5 h7M15 40.5 h7M27 40.5 h7M39 40.5 h7M51 40.5 h7" stroke="#000" stroke-width="1.2" fill="none"/></g><g transform="translate(642,579)"><rect x="0" y="0" width="61" height="9" fill="#156082"/><rect x="0" y="0" width="61" height="1" fill="#000"/><rect x="0" y="9" width="61" height="1" fill="#000"/><rect x="0" y="45" width="61" height="1" fill="#000"/><path d="M3 4.5 h7M15 4.5 h7M27 4.5 h7M39 4.5 h7M51 4.5 h7" stroke="#fff" stroke-width="1.2" fill="none"/><path d="M3 13.5 h7M15 13.5 h7M27 13.5 h7M39 13.5 h7M51 13.5 h7" stroke="#000" stroke-width="1.2" fill="none"/><path d="M3 22.5 h7M15 22.5 h7M27 22.5 h7M39 22.5 h7M51 22.5 h7" stroke="#000" stroke-width="1.2" fill="none"/><path d="M3 31.5 h7M15 31.5 h7M27 31.5 h7M39 31.5 h7M51 31.5 h7" stroke="#000" stroke-width="1.2" fill="none"/><path d="M3 40.5 h7M15 40.5 h7M27 40.5 h7M39 40.5 h7M51 40.5 h7" stroke="#000" stroke-width="1.2" fill="none"/></g><g transform="translate(711,579)"><rect x="0" y="0" width="61" height="9" fill="#E97132"/><rect x="0" y="0" width="61" height="1" fill="#000"/><rect x="0" y="9" width="61" height="1" fill="#000"/><rect x="0" y="45" width="61" height="1" fill="#000"/><path d="M3 4.5 h7M15 4.5 h7M27 4.5 h7M39 4.5 h7M51 4.5 h7" stroke="#fff" stroke-width="1.2" fill="none"/><path d="M3 13.5 h7M15 13.5 h7M27 13.5 h7M39 13.5 h7M51 13.5 h7" stroke="#000" stroke-width="1.2" fill="none"/><path d="M3 22.5 h7M15 22.5 h7M27 22.5 h7M39 22.5 h7M51 22.5 h7" stroke="#000" stroke-width="1.2" fill="none"/><path d="M3 31.5 h7M15 31.5 h7M27 31.5 h7M39 31.5 h7M51 31.5 h7" stroke="#000" stroke-width="1.2" fill="none"/><path d="M3 40.5 h7M15 40.5 h7M27 40.5 h7M39 40.5 h7M51 40.5 h7" stroke="#000" stroke-width="1.2" fill="none"/></g><g transform="translate(780,579)"><rect x="0" y="0" width="61" height="9" fill="#196B24"/><rect x="0" y="0" width="61" height="1" fill="#000"/><rect x="0" y="9" width="61" height="1" fill="#000"/><rect x="0" y="45" width="61" height="1" fill="#000"/><path d="M3 4.5 h7M15 4.5 h7M27 4.5 h7M39 4.5 h7M51 4.5 h7" stroke="#fff" stroke-width="1.2" fill="none"/><path d="M3 13.5 h7M15 13.5 h7M27 13.5 h7M39 13.5 h7M51 13.5 h7" stroke="#000" stroke-width="1.2" fill="none"/><path d="M3 22.5 h7M15 22.5 h7M27 22.5 h7M39 22.5 h7M51 22.5 h7" stroke="#000" stroke-width="1.2" fill="none"/><path d="M3 31.5 h7M15 31.5 h7M27 31.5 h7M39 31.5 h7M51 31.5 h7" stroke="#000" stroke-width="1.2" fill="none"/><path d="M3 40.5 h7M15 40.5 h7M27 40.5 h7M39 40.5 h7M51 40.5 h7" stroke="#000" stroke-width="1.2" fill="none"/></g><g transform="translate(849,579)"><rect x="0" y="0" width="61" height="9" fill="#0F9ED5"/><rect x="0" y="0" width="61" height="1" fill="#000"/><rect x="0" y="9" width="61" height="1" fill="#000"/><rect x="0" y="45" width="61" height="1" fill="#000"/><path d="M3 4.5 h7M15 4.5 h7M27 4.5 h7M39 4.5 h7M51 4.5 h7" stroke="#fff" stroke-width="1.2" fill="none"/><path d="M3 13.5 h7M15 13.5 h7M27 13.5 h7M39 13.5 h7M51 13.5 h7" stroke="#000" stroke-width="1.2" fill="none"/><path d="M3 22.5 h7M15 22.5 h7M27 22.5 h7M39 22.5 h7M51 22.5 h7" stroke="#000" stroke-width="1.2" fill="none"/><path d="M3 31.5 h7M15 31.5 h7M27 31.5 h7M39 31.5 h7M51 31.5 h7" stroke="#000" stroke-width="1.2" fill="none"/><path d="M3 40.5 h7M15 40.5 h7M27 40.5 h7M39 40.5 h7M51 40.5 h7" stroke="#000" stroke-width="1.2" fill="none"/></g><g transform="translate(918,579)"><rect x="0" y="0" width="61" height="9" fill="#A02B93"/><rect x="0" y="0" width="61" height="1" fill="#000"/><rect x="0" y="9" width="61" height="1" fill="#000"/><rect x="0" y="45" width="61" height="1" fill="#000"/><path d="M3 4.5 h7M15 4.5 h7M27 4.5 h7M39 4.5 h7M51 4.5 h7" stroke="#fff" stroke-width="1.2" fill="none"/><path d="M3 13.5 h7M15 13.5 h7M27 13.5 h7M39 13.5 h7M51 13.5 h7" stroke="#000" stroke-width="1.2" fill="none"/><path d="M3 22.5 h7M15 22.5 h7M27 22.5 h7M39 22.5 h7M51 22.5 h7" stroke="#000" stroke-width="1.2" fill="none"/><path d="M3 31.5 h7M15 31.5 h7M27 31.5 h7M39 31.5 h7M51 31.5 h7" stroke="#000" stroke-width="1.2" fill="none"/><path d="M3 40.5 h7M15 40.5 h7M27 40.5 h7M39 40.5 h7M51 40.5 h7" stroke="#000" stroke-width="1.2" fill="none"/></g><g transform="translate(987,579)"><rect x="0" y="0" width="61" height="9" fill="#4EA72E"/><rect x="0" y="0" width="61" height="1" fill="#000"/><rect x="0" y="9" width="61" height="1" fill="#000"/><rect x="0" y="45" width="61" height="1" fill="#000"/><path d="M3 4.5 h7M15 4.5 h7M27 4.5 h7M39 4.5 h7M51 4.5 h7" stroke="#fff" stroke-width="1.2" fill="none"/><path d="M3 13.5 h7M15 13.5 h7M27 13.5 h7M39 13.5 h7M51 13.5 h7" stroke="#000" stroke-width="1.2" fill="none"/><path d="M3 22.5 h7M15 22.5 h7M27 22.5 h7M39 22.5 h7M51 22.5 h7" stroke="#000" stroke-width="1.2" fill="none"/><path d="M3 31.5 h7M15 31.5 h7M27 31.5 h7M39 31.5 h7M51 31.5 h7" stroke="#000" stroke-width="1.2" fill="none"/><path d="M3 40.5 h7M15 40.5 h7M27 40.5 h7M39 40.5 h7M51 40.5 h7" stroke="#000" stroke-width="1.2" fill="none"/></g><g transform="translate(573,633)"><rect x="0" y="0" width="61" height="46" fill="#D9D9D9"/><rect x="0" y="0" width="61" height="1" fill="#000000"/><rect x="0" y="9" width="61" height="1" fill="#000000"/><rect x="0" y="18" width="61" height="1" fill="#000000"/><rect x="0" y="27" width="61" height="1" fill="#000000"/><rect x="0" y="36" width="61" height="1" fill="#000000"/><rect x="0" y="45" width="61" height="1" fill="#000000"/><rect x="0" y="0" width="1" height="46" fill="#000000"/><rect x="12" y="0" width="1" height="46" fill="#000000"/><rect x="24" y="0" width="1" height="46" fill="#000000"/><rect x="36" y="0" width="1" height="46" fill="#000000"/><rect x="48" y="0" width="1" height="46" fill="#000000"/><rect x="60" y="0" width="1" height="46" fill="#000000"/><path d="M3 4.5 h7M15 4.5 h7M27 4.5 h7M39 4.5 h7M51 4.5 h7" stroke="#000" stroke-width="1.2" fill="none"/><path d="M3 13.5 h7M15 13.5 h7M27 13.5 h7M39 13.5 h7M51 13.5 h7" stroke="#000" stroke-width="1.2" fill="none"/><path d="M3 22.5 h7M15 22.5 h7M27 22.5 h7M39 22.5 h7M51 22.5 h7" stroke="#000" stroke-width="1.2" fill="none"/><path d="M3 31.5 h7M15 31.5 h7M27 31.5 h7M39 31.5 h7M51 31.5 h7" stroke="#000" stroke-width="1.2" fill="none"/><path d="M3 40.5 h7M15 40.5 h7M27 40.5 h7M39 40.5 h7M51 40.5 h7" stroke="#000" stroke-width="1.2" fill="none"/></g><g transform="translate(642,633)"><rect x="0" y="0" width="61" height="46" fill="#C1E4F5"/><rect x="0" y="0" width="61" height="1" fill="#46B1E1"/><rect x="0" y="9" width="61" height="1" fill="#46B1E1"/><rect x="0" y="18" width="61" height="1" fill="#46B1E1"/><rect x="0" y="27" width="61" height="1" fill="#46B1E1"/><rect x="0" y="36" width="61" height="1" fill="#46B1E1"/><rect x="0" y="45" width="61" height="1" fill="#46B1E1"/><rect x="0" y="0" width="1" height="46" fill="#46B1E1"/><rect x="12" y="0" width="1" height="46" fill="#46B1E1"/><rect x="24" y="0" width="1" height="46" fill="#46B1E1"/><rect x="36" y="0" width="1" height="46" fill="#46B1E1"/><rect x="48" y="0" width="1" height="46" fill="#46B1E1"/><rect x="60" y="0" width="1" height="46" fill="#46B1E1"/><path d="M3 4.5 h7M15 4.5 h7M27 4.5 h7M39 4.5 h7M51 4.5 h7" stroke="#000" stroke-width="1.2" fill="none"/><path d="M3 13.5 h7M15 13.5 h7M27 13.5 h7M39 13.5 h7M51 13.5 h7" stroke="#000" stroke-width="1.2" fill="none"/><path d="M3 22.5 h7M15 22.5 h7M27 22.5 h7M39 22.5 h7M51 22.5 h7" stroke="#000" stroke-width="1.2" fill="none"/><path d="M3 31.5 h7M15 31.5 h7M27 31.5 h7M39 31.5 h7M51 31.5 h7" stroke="#000" stroke-width="1.2" fill="none"/><path d="M3 40.5 h7M15 40.5 h7M27 40.5 h7M39 40.5 h7M51 40.5 h7" stroke="#000" stroke-width="1.2" fill="none"/></g><g transform="translate(711,633)"><rect x="0" y="0" width="61" height="46" fill="#FBE3D6"/><rect x="0" y="0" width="61" height="1" fill="#F2AA84"/><rect x="0" y="9" width="61" height="1" fill="#F2AA84"/><rect x="0" y="18" width="61" height="1" fill="#F2AA84"/><rect x="0" y="27" width="61" height="1" fill="#F2AA84"/><rect x="0" y="36" width="61" height="1" fill="#F2AA84"/><rect x="0" y="45" width="61" height="1" fill="#F2AA84"/><rect x="0" y="0" width="1" height="46" fill="#F2AA84"/><rect x="12" y="0" width="1" height="46" fill="#F2AA84"/><rect x="24" y="0" width="1" height="46" fill="#F2AA84"/><rect x="36" y="0" width="1" height="46" fill="#F2AA84"/><rect x="48" y="0" width="1" height="46" fill="#F2AA84"/><rect x="60" y="0" width="1" height="46" fill="#F2AA84"/><path d="M3 4.5 h7M15 4.5 h7M27 4.5 h7M39 4.5 h7M51 4.5 h7" stroke="#000" stroke-width="1.2" fill="none"/><path d="M3 13.5 h7M15 13.5 h7M27 13.5 h7M39 13.5 h7M51 13.5 h7" stroke="#000" stroke-width="1.2" fill="none"/><path d="M3 22.5 h7M15 22.5 h7M27 22.5 h7M39 22.5 h7M51 22.5 h7" stroke="#000" stroke-width="1.2" fill="none"/><path d="M3 31.5 h7M15 31.5 h7M27 31.5 h7M39 31.5 h7M51 31.5 h7" stroke="#000" stroke-width="1.2" fill="none"/><path d="M3 40.5 h7M15 40.5 h7M27 40.5 h7M39 40.5 h7M51 40.5 h7" stroke="#000" stroke-width="1.2" fill="none"/></g><g transform="translate(780,633)"><rect x="0" y="0" width="61" height="46" fill="#C1F0C8"/><rect x="0" y="0" width="61" height="1" fill="#47D45A"/><rect x="0" y="9" width="61" height="1" fill="#47D45A"/><rect x="0" y="18" width="61" height="1" fill="#47D45A"/><rect x="0" y="27" width="61" height="1" fill="#47D45A"/><rect x="0" y="36" width="61" height="1" fill="#47D45A"/><rect x="0" y="45" width="61" height="1" fill="#47D45A"/><rect x="0" y="0" width="1" height="46" fill="#47D45A"/><rect x="12" y="0" width="1" height="46" fill="#47D45A"/><rect x="24" y="0" width="1" height="46" fill="#47D45A"/><rect x="36" y="0" width="1" height="46" fill="#47D45A"/><rect x="48" y="0" width="1" height="46" fill="#47D45A"/><rect x="60" y="0" width="1" height="46" fill="#47D45A"/><path d="M3 4.5 h7M15 4.5 h7M27 4.5 h7M39 4.5 h7M51 4.5 h7" stroke="#000" stroke-width="1.2" fill="none"/><path d="M3 13.5 h7M15 13.5 h7M27 13.5 h7M39 13.5 h7M51 13.5 h7" stroke="#000" stroke-width="1.2" fill="none"/><path d="M3 22.5 h7M15 22.5 h7M27 22.5 h7M39 22.5 h7M51 22.5 h7" stroke="#000" stroke-width="1.2" fill="none"/><path d="M3 31.5 h7M15 31.5 h7M27 31.5 h7M39 31.5 h7M51 31.5 h7" stroke="#000" stroke-width="1.2" fill="none"/><path d="M3 40.5 h7M15 40.5 h7M27 40.5 h7M39 40.5 h7M51 40.5 h7" stroke="#000" stroke-width="1.2" fill="none"/></g><g transform="translate(849,633)"><rect x="0" y="0" width="61" height="46" fill="#CAEEFB"/><rect x="0" y="0" width="61" height="1" fill="#61CBF4"/><rect x="0" y="9" width="61" height="1" fill="#61CBF4"/><rect x="0" y="18" width="61" height="1" fill="#61CBF4"/><rect x="0" y="27" width="61" height="1" fill="#61CBF4"/><rect x="0" y="36" width="61" height="1" fill="#61CBF4"/><rect x="0" y="45" width="61" height="1" fill="#61CBF4"/><rect x="0" y="0" width="1" height="46" fill="#61CBF4"/><rect x="12" y="0" width="1" height="46" fill="#61CBF4"/><rect x="24" y="0" width="1" height="46" fill="#61CBF4"/><rect x="36" y="0" width="1" height="46" fill="#61CBF4"/><rect x="48" y="0" width="1" height="46" fill="#61CBF4"/><rect x="60" y="0" width="1" height="46" fill="#61CBF4"/><path d="M3 4.5 h7M15 4.5 h7M27 4.5 h7M39 4.5 h7M51 4.5 h7" stroke="#000" stroke-width="1.2" fill="none"/><path d="M3 13.5 h7M15 13.5 h7M27 13.5 h7M39 13.5 h7M51 13.5 h7" stroke="#000" stroke-width="1.2" fill="none"/><path d="M3 22.5 h7M15 22.5 h7M27 22.5 h7M39 22.5 h7M51 22.5 h7" stroke="#000" stroke-width="1.2" fill="none"/><path d="M3 31.5 h7M15 31.5 h7M27 31.5 h7M39 31.5 h7M51 31.5 h7" stroke="#000" stroke-width="1.2" fill="none"/><path d="M3 40.5 h7M15 40.5 h7M27 40.5 h7M39 40.5 h7M51 40.5 h7" stroke="#000" stroke-width="1.2" fill="none"/></g><g transform="translate(918,633)"><rect x="0" y="0" width="61" height="46" fill="#F2CFEE"/><rect x="0" y="0" width="61" height="1" fill="#D86ECC"/><rect x="0" y="9" width="61" height="1" fill="#D86ECC"/><rect x="0" y="18" width="61" height="1" fill="#D86ECC"/><rect x="0" y="27" width="61" height="1" fill="#D86ECC"/><rect x="0" y="36" width="61" height="1" fill="#D86ECC"/><rect x="0" y="45" width="61" height="1" fill="#D86ECC"/><rect x="0" y="0" width="1" height="46" fill="#D86ECC"/><rect x="12" y="0" width="1" height="46" fill="#D86ECC"/><rect x="24" y="0" width="1" height="46" fill="#D86ECC"/><rect x="36" y="0" width="1" height="46" fill="#D86ECC"/><rect x="48" y="0" width="1" height="46" fill="#D86ECC"/><rect x="60" y="0" width="1" height="46" fill="#D86ECC"/><path d="M3 4.5 h7M15 4.5 h7M27 4.5 h7M39 4.5 h7M51 4.5 h7" stroke="#000" stroke-width="1.2" fill="none"/><path d="M3 13.5 h7M15 13.5 h7M27 13.5 h7M39 13.5 h7M51 13.5 h7" stroke="#000" stroke-width="1.2" fill="none"/><path d="M3 22.5 h7M15 22.5 h7M27 22.5 h7M39 22.5 h7M51 22.5 h7" stroke="#000" stroke-width="1.2" fill="none"/><path d="M3 31.5 h7M15 31.5 h7M27 31.5 h7M39 31.5 h7M51 31.5 h7" stroke="#000" stroke-width="1.2" fill="none"/><path d="M3 40.5 h7M15 40.5 h7M27 40.5 h7M39 40.5 h7M51 40.5 h7" stroke="#000" stroke-width="1.2" fill="none"/></g><g transform="translate(987,633)"><rect x="0" y="0" width="61" height="46" fill="#D9F2D0"/><rect x="0" y="0" width="61" height="1" fill="#8ED973"/><rect x="0" y="9" width="61" height="1" fill="#8ED973"/><rect x="0" y="18" width="61" height="1" fill="#8ED973"/><rect x="0" y="27" width="61" height="1" fill="#8ED973"/><rect x="0" y="36" width="61" height="1" fill="#8ED973"/><rect x="0" y="45" width="61" height="1" fill="#8ED973"/><rect x="0" y="0" width="1" height="46" fill="#8ED973"/><rect x="12" y="0" width="1" height="46" fill="#8ED973"/><rect x="24" y="0" width="1" height="46" fill="#8ED973"/><rect x="36" y="0" width="1" height="46" fill="#8ED973"/><rect x="48" y="0" width="1" height="46" fill="#8ED973"/><rect x="60" y="0" width="1" height="46" fill="#8ED973"/><path d="M3 4.5 h7M15 4.5 h7M27 4.5 h7M39 4.5 h7M51 4.5 h7" stroke="#000" stroke-width="1.2" fill="none"/><path d="M3 13.5 h7M15 13.5 h7M27 13.5 h7M39 13.5 h7M51 13.5 h7" stroke="#000" stroke-width="1.2" fill="none"/><path d="M3 22.5 h7M15 22.5 h7M27 22.5 h7M39 22.5 h7M51 22.5 h7" stroke="#000" stroke-width="1.2" fill="none"/><path d="M3 31.5 h7M15 31.5 h7M27 31.5 h7M39 31.5 h7M51 31.5 h7" stroke="#000" stroke-width="1.2" fill="none"/><path d="M3 40.5 h7M15 40.5 h7M27 40.5 h7M39 40.5 h7M51 40.5 h7" stroke="#000" stroke-width="1.2" fill="none"/></g><g transform="translate(573,726)"><rect x="0" y="0" width="61" height="9" fill="#000"/><rect x="0" y="10" width="61" height="36" fill="#737373"/><path d="M3 4.5 h7M15 4.5 h7M27 4.5 h7M39 4.5 h7M51 4.5 h7" stroke="#fff" stroke-width="1.2" fill="none"/><path d="M3 13.5 h7M15 13.5 h7M27 13.5 h7M39 13.5 h7M51 13.5 h7" stroke="#fff" stroke-width="1.2" fill="none"/><path d="M3 22.5 h7M15 22.5 h7M27 22.5 h7M39 22.5 h7M51 22.5 h7" stroke="#fff" stroke-width="1.2" fill="none"/><path d="M3 31.5 h7M15 31.5 h7M27 31.5 h7M39 31.5 h7M51 31.5 h7" stroke="#fff" stroke-width="1.2" fill="none"/><path d="M3 40.5 h7M15 40.5 h7M27 40.5 h7M39 40.5 h7M51 40.5 h7" stroke="#fff" stroke-width="1.2" fill="none"/></g><g transform="translate(642,726)"><rect x="0" y="0" width="61" height="9" fill="#000"/><rect x="0" y="10" width="61" height="36" fill="#156082"/><path d="M3 4.5 h7M15 4.5 h7M27 4.5 h7M39 4.5 h7M51 4.5 h7" stroke="#fff" stroke-width="1.2" fill="none"/><path d="M3 13.5 h7M15 13.5 h7M27 13.5 h7M39 13.5 h7M51 13.5 h7" stroke="#fff" stroke-width="1.2" fill="none"/><path d="M3 22.5 h7M15 22.5 h7M27 22.5 h7M39 22.5 h7M51 22.5 h7" stroke="#fff" stroke-width="1.2" fill="none"/><path d="M3 31.5 h7M15 31.5 h7M27 31.5 h7M39 31.5 h7M51 31.5 h7" stroke="#fff" stroke-width="1.2" fill="none"/><path d="M3 40.5 h7M15 40.5 h7M27 40.5 h7M39 40.5 h7M51 40.5 h7" stroke="#fff" stroke-width="1.2" fill="none"/></g><g transform="translate(711,726)"><rect x="0" y="0" width="61" height="9" fill="#000"/><rect x="0" y="10" width="61" height="36" fill="#E97132"/><path d="M3 4.5 h7M15 4.5 h7M27 4.5 h7M39 4.5 h7M51 4.5 h7" stroke="#fff" stroke-width="1.2" fill="none"/><path d="M3 13.5 h7M15 13.5 h7M27 13.5 h7M39 13.5 h7M51 13.5 h7" stroke="#fff" stroke-width="1.2" fill="none"/><path d="M3 22.5 h7M15 22.5 h7M27 22.5 h7M39 22.5 h7M51 22.5 h7" stroke="#fff" stroke-width="1.2" fill="none"/><path d="M3 31.5 h7M15 31.5 h7M27 31.5 h7M39 31.5 h7M51 31.5 h7" stroke="#fff" stroke-width="1.2" fill="none"/><path d="M3 40.5 h7M15 40.5 h7M27 40.5 h7M39 40.5 h7M51 40.5 h7" stroke="#fff" stroke-width="1.2" fill="none"/></g><g transform="translate(780,726)"><rect x="0" y="0" width="61" height="9" fill="#000"/><rect x="0" y="10" width="61" height="36" fill="#196B24"/><path d="M3 4.5 h7M15 4.5 h7M27 4.5 h7M39 4.5 h7M51 4.5 h7" stroke="#fff" stroke-width="1.2" fill="none"/><path d="M3 13.5 h7M15 13.5 h7M27 13.5 h7M39 13.5 h7M51 13.5 h7" stroke="#fff" stroke-width="1.2" fill="none"/><path d="M3 22.5 h7M15 22.5 h7M27 22.5 h7M39 22.5 h7M51 22.5 h7" stroke="#fff" stroke-width="1.2" fill="none"/><path d="M3 31.5 h7M15 31.5 h7M27 31.5 h7M39 31.5 h7M51 31.5 h7" stroke="#fff" stroke-width="1.2" fill="none"/><path d="M3 40.5 h7M15 40.5 h7M27 40.5 h7M39 40.5 h7M51 40.5 h7" stroke="#fff" stroke-width="1.2" fill="none"/></g><g transform="translate(849,726)"><rect x="0" y="0" width="61" height="9" fill="#000"/><rect x="0" y="10" width="61" height="36" fill="#0F9ED5"/><path d="M3 4.5 h7M15 4.5 h7M27 4.5 h7M39 4.5 h7M51 4.5 h7" stroke="#fff" stroke-width="1.2" fill="none"/><path d="M3 13.5 h7M15 13.5 h7M27 13.5 h7M39 13.5 h7M51 13.5 h7" stroke="#fff" stroke-width="1.2" fill="none"/><path d="M3 22.5 h7M15 22.5 h7M27 22.5 h7M39 22.5 h7M51 22.5 h7" stroke="#fff" stroke-width="1.2" fill="none"/><path d="M3 31.5 h7M15 31.5 h7M27 31.5 h7M39 31.5 h7M51 31.5 h7" stroke="#fff" stroke-width="1.2" fill="none"/><path d="M3 40.5 h7M15 40.5 h7M27 40.5 h7M39 40.5 h7M51 40.5 h7" stroke="#fff" stroke-width="1.2" fill="none"/></g><g transform="translate(918,726)"><rect x="0" y="0" width="61" height="9" fill="#000"/><rect x="0" y="10" width="61" height="36" fill="#A02B93"/><path d="M3 4.5 h7M15 4.5 h7M27 4.5 h7M39 4.5 h7M51 4.5 h7" stroke="#fff" stroke-width="1.2" fill="none"/><path d="M3 13.5 h7M15 13.5 h7M27 13.5 h7M39 13.5 h7M51 13.5 h7" stroke="#fff" stroke-width="1.2" fill="none"/><path d="M3 22.5 h7M15 22.5 h7M27 22.5 h7M39 22.5 h7M51 22.5 h7" stroke="#fff" stroke-width="1.2" fill="none"/><path d="M3 31.5 h7M15 31.5 h7M27 31.5 h7M39 31.5 h7M51 31.5 h7" stroke="#fff" stroke-width="1.2" fill="none"/><path d="M3 40.5 h7M15 40.5 h7M27 40.5 h7M39 40.5 h7M51 40.5 h7" stroke="#fff" stroke-width="1.2" fill="none"/></g><g transform="translate(987,726)"><rect x="0" y="0" width="61" height="9" fill="#000"/><rect x="0" y="10" width="61" height="36" fill="#4EA72E"/><path d="M3 4.5 h7M15 4.5 h7M27 4.5 h7M39 4.5 h7M51 4.5 h7" stroke="#fff" stroke-width="1.2" fill="none"/><path d="M3 13.5 h7M15 13.5 h7M27 13.5 h7M39 13.5 h7M51 13.5 h7" stroke="#fff" stroke-width="1.2" fill="none"/><path d="M3 22.5 h7M15 22.5 h7M27 22.5 h7M39 22.5 h7M51 22.5 h7" stroke="#fff" stroke-width="1.2" fill="none"/><path d="M3 31.5 h7M15 31.5 h7M27 31.5 h7M39 31.5 h7M51 31.5 h7" stroke="#fff" stroke-width="1.2" fill="none"/><path d="M3 40.5 h7M15 40.5 h7M27 40.5 h7M39 40.5 h7M51 40.5 h7" stroke="#fff" stroke-width="1.2" fill="none"/></g><g transform="translate(573,780)"><rect x="0" y="0" width="61" height="10" fill="#000000"/><rect x="0" y="10" width="61" height="36" fill="#D9D9D9"/><path d="M3 4.5 h7M15 4.5 h7M27 4.5 h7M39 4.5 h7M51 4.5 h7" stroke="#fff" stroke-width="1.2" fill="none"/><path d="M3 13.5 h7M15 13.5 h7M27 13.5 h7M39 13.5 h7M51 13.5 h7" stroke="#000" stroke-width="1.2" fill="none"/><path d="M3 22.5 h7M15 22.5 h7M27 22.5 h7M39 22.5 h7M51 22.5 h7" stroke="#000" stroke-width="1.2" fill="none"/><path d="M3 31.5 h7M15 31.5 h7M27 31.5 h7M39 31.5 h7M51 31.5 h7" stroke="#000" stroke-width="1.2" fill="none"/><path d="M3 40.5 h7M15 40.5 h7M27 40.5 h7M39 40.5 h7M51 40.5 h7" stroke="#000" stroke-width="1.2" fill="none"/></g><g transform="translate(642,780)"><rect x="0" y="0" width="61" height="10" fill="#E97132"/><rect x="0" y="10" width="61" height="36" fill="#C1E4F5"/><path d="M3 4.5 h7M15 4.5 h7M27 4.5 h7M39 4.5 h7M51 4.5 h7" stroke="#fff" stroke-width="1.2" fill="none"/><path d="M3 13.5 h7M15 13.5 h7M27 13.5 h7M39 13.5 h7M51 13.5 h7" stroke="#000" stroke-width="1.2" fill="none"/><path d="M3 22.5 h7M15 22.5 h7M27 22.5 h7M39 22.5 h7M51 22.5 h7" stroke="#000" stroke-width="1.2" fill="none"/><path d="M3 31.5 h7M15 31.5 h7M27 31.5 h7M39 31.5 h7M51 31.5 h7" stroke="#000" stroke-width="1.2" fill="none"/><path d="M3 40.5 h7M15 40.5 h7M27 40.5 h7M39 40.5 h7M51 40.5 h7" stroke="#000" stroke-width="1.2" fill="none"/></g><g transform="translate(711,780)"><rect x="0" y="0" width="61" height="10" fill="#0F9ED5"/><rect x="0" y="10" width="61" height="36" fill="#C1F0C8"/><path d="M3 4.5 h7M15 4.5 h7M27 4.5 h7M39 4.5 h7M51 4.5 h7" stroke="#fff" stroke-width="1.2" fill="none"/><path d="M3 13.5 h7M15 13.5 h7M27 13.5 h7M39 13.5 h7M51 13.5 h7" stroke="#000" stroke-width="1.2" fill="none"/><path d="M3 22.5 h7M15 22.5 h7M27 22.5 h7M39 22.5 h7M51 22.5 h7" stroke="#000" stroke-width="1.2" fill="none"/><path d="M3 31.5 h7M15 31.5 h7M27 31.5 h7M39 31.5 h7M51 31.5 h7" stroke="#000" stroke-width="1.2" fill="none"/><path d="M3 40.5 h7M15 40.5 h7M27 40.5 h7M39 40.5 h7M51 40.5 h7" stroke="#000" stroke-width="1.2" fill="none"/></g><g transform="translate(780,780)"><rect x="0" y="0" width="61" height="10" fill="#4EA72E"/><rect x="0" y="10" width="61" height="36" fill="#F2CFEE"/><path d="M3 4.5 h7M15 4.5 h7M27 4.5 h7M39 4.5 h7M51 4.5 h7" stroke="#fff" stroke-width="1.2" fill="none"/><path d="M3 13.5 h7M15 13.5 h7M27 13.5 h7M39 13.5 h7M51 13.5 h7" stroke="#000" stroke-width="1.2" fill="none"/><path d="M3 22.5 h7M15 22.5 h7M27 22.5 h7M39 22.5 h7M51 22.5 h7" stroke="#000" stroke-width="1.2" fill="none"/><path d="M3 31.5 h7M15 31.5 h7M27 31.5 h7M39 31.5 h7M51 31.5 h7" stroke="#000" stroke-width="1.2" fill="none"/><path d="M3 40.5 h7M15 40.5 h7M27 40.5 h7M39 40.5 h7M51 40.5 h7" stroke="#000" stroke-width="1.2" fill="none"/></g><g transform="translate(835,98)"><rect x="0" y="18" width="61" height="1" fill="#F2AA84"/><rect x="0" y="27" width="61" height="1" fill="#F2AA84"/><rect x="0" y="36" width="61" height="1" fill="#F2AA84"/><rect x="0" y="45" width="61" height="1" fill="#F2AA84"/><rect x="0" y="0" width="1" height="46" fill="#F2AA84"/><rect x="60" y="0" width="1" height="46" fill="#F2AA84"/><rect x="0" y="0" width="61" height="10" fill="#E97132"/><path d="M3 4.5 h7M15 4.5 h7M27 4.5 h7M39 4.5 h7M51 4.5 h7" stroke="#fff" stroke-width="1.2" fill="none"/><path d="M3 13.5 h7M15 13.5 h7M27 13.5 h7M39 13.5 h7M51 13.5 h7" stroke="#000" stroke-width="1.2" fill="none"/><path d="M3 22.5 h7M15 22.5 h7M27 22.5 h7M39 22.5 h7M51 22.5 h7" stroke="#000" stroke-width="1.2" fill="none"/><path d="M3 31.5 h7M15 31.5 h7M27 31.5 h7M39 31.5 h7M51 31.5 h7" stroke="#000" stroke-width="1.2" fill="none"/><path d="M3 40.5 h7M15 40.5 h7M27 40.5 h7M39 40.5 h7M51 40.5 h7" stroke="#000" stroke-width="1.2" fill="none"/></g><g transform="translate(904,98)"><rect x="0" y="18" width="61" height="1" fill="#47D45A"/><rect x="0" y="27" width="61" height="1" fill="#47D45A"/><rect x="0" y="36" width="61" height="1" fill="#47D45A"/><rect x="0" y="45" width="61" height="1" fill="#47D45A"/><rect x="0" y="0" width="1" height="46" fill="#47D45A"/><rect x="60" y="0" width="1" height="46" fill="#47D45A"/><rect x="0" y="0" width="61" height="10" fill="#196B24"/><path d="M3 4.5 h7M15 4.5 h7M27 4.5 h7M39 4.5 h7M51 4.5 h7" stroke="#fff" stroke-width="1.2" fill="none"/><path d="M3 13.5 h7M15 13.5 h7M27 13.5 h7M39 13.5 h7M51 13.5 h7" stroke="#000" stroke-width="1.2" fill="none"/><path d="M3 22.5 h7M15 22.5 h7M27 22.5 h7M39 22.5 h7M51 22.5 h7" stroke="#000" stroke-width="1.2" fill="none"/><path d="M3 31.5 h7M15 31.5 h7M27 31.5 h7M39 31.5 h7M51 31.5 h7" stroke="#000" stroke-width="1.2" fill="none"/><path d="M3 40.5 h7M15 40.5 h7M27 40.5 h7M39 40.5 h7M51 40.5 h7" stroke="#000" stroke-width="1.2" fill="none"/></g><g transform="translate(973,98)"><rect x="0" y="18" width="61" height="1" fill="#61CBF4"/><rect x="0" y="27" width="61" height="1" fill="#61CBF4"/><rect x="0" y="36" width="61" height="1" fill="#61CBF4"/><rect x="0" y="45" width="61" height="1" fill="#61CBF4"/><rect x="0" y="0" width="1" height="46" fill="#61CBF4"/><rect x="60" y="0" width="1" height="46" fill="#61CBF4"/><rect x="0" y="0" width="61" height="10" fill="#0F9ED5"/><path d="M3 4.5 h7M15 4.5 h7M27 4.5 h7M39 4.5 h7M51 4.5 h7" stroke="#fff" stroke-width="1.2" fill="none"/><path d="M3 13.5 h7M15 13.5 h7M27 13.5 h7M39 13.5 h7M51 13.5 h7" stroke="#000" stroke-width="1.2" fill="none"/><path d="M3 22.5 h7M15 22.5 h7M27 22.5 h7M39 22.5 h7M51 22.5 h7" stroke="#000" stroke-width="1.2" fill="none"/><path d="M3 31.5 h7M15 31.5 h7M27 31.5 h7M39 31.5 h7M51 31.5 h7" stroke="#000" stroke-width="1.2" fill="none"/><path d="M3 40.5 h7M15 40.5 h7M27 40.5 h7M39 40.5 h7M51 40.5 h7" stroke="#000" stroke-width="1.2" fill="none"/></g></svg>
<div style="left:707px;top:467px;width:69px;height:54px;border:1px solid #4a4a4a;"></div>
<svg style="left:581px;top:846px;shape-rendering:crispEdges;" width="17" height="16" viewBox="0 0 17 16">
<path d="M0.5 4V14.5H16M5.5 1.5H15.5V6M5.5 5.5V14.5M0.5 10H6M10.5 1.5V6" fill="none" stroke="#333" stroke-width="1"/>
<rect x="5.5" y="5.5" width="10" height="9" fill="#7fb4ea" stroke="#1e73c8" stroke-width="1"/>
<path d="M10.5 5.5V14.5M5.5 10H15.5" stroke="#1e73c8" stroke-width="1"/>
<path d="M3.5 0V7M0 3.5H7" stroke="#1e8c45" stroke-width="1.2"/>
</svg>
<span class="t" style="left:605.52px;top:849.00px;font-size:12px;color:#262626;transform:scaleX(0.9765);"><u style="text-underline-offset:1px">N</u>ew Table Style...</span>
<svg style="left:581px;top:875px;shape-rendering:crispEdges;" width="17" height="15" viewBox="0 0 17 15">
<path d="M0.5 0.5H15.5V5M0.5 0.5V13.5H6" fill="none" stroke="#333" stroke-width="1"/>
<path d="M0.5 4.5H15.5M0.5 9H6M5.5 0.5V9M10.5 0.5V5" stroke="#333" stroke-width="1"/>
<rect x="6" y="5" width="5" height="4" fill="#7fb4ea"/>
</svg>
<svg style="left:581px;top:875px;" width="17" height="15" viewBox="0 0 17 15">
<path d="M6.8 11.2L13.2 5.6L16.2 8.8L9.8 14.4Z" fill="#f3d9f5" stroke="#a43fb4" stroke-width="1.3"/>
<path d="M9 9.4L12 12.4" stroke="#a43fb4" stroke-width="1.6"/>
<path d="M7.4 11L10.2 14" stroke="#a43fb4" stroke-width="2.2"/>
</svg>
<span class="t" style="left:605.93px;top:877.00px;font-size:12px;color:#262626;transform:scaleX(0.9498);"><u style="text-underline-offset:1px">C</u>lear</span>
<div style="left:809px;top:898px;width:2px;height:2px;background:#c6c6c6;"></div>
<div style="left:814px;top:898px;width:2px;height:2px;background:#c6c6c6;"></div>
<div style="left:819px;top:898px;width:2px;height:2px;background:#c6c6c6;"></div>
<div style="left:824px;top:898px;width:2px;height:2px;background:#c6c6c6;"></div>
<div style="left:1px;top:922px;width:1158px;height:34px;background:#e6e6e6;"></div>
<div style="left:1px;top:955px;width:1158px;height:1px;background:#d0d0d0;"></div>
<div style="left:1px;top:956px;width:1158px;height:21px;background:#f3f3f3;"></div>
<svg style="left:29px;top:932px;" width="8" height="13" viewBox="0 0 8 13"><path d="M6.8 0.8L1.2 6.5L6.8 12.2" fill="none" stroke="#a0a0a0" stroke-width="1.3"/></svg>
<svg style="left:61px;top:932px;" width="8" height="13" viewBox="0 0 8 13"><path d="M1.2 0.8L6.8 6.5L1.2 12.2" fill="none" stroke="#a0a0a0" stroke-width="1.3"/></svg>
<div style="left:117px;top:924px;width:58px;height:28px;background:#fff;border-radius:0 0 5px 5px;box-shadow:0 1px 2px rgba(0,0,0,.12);"></div>
<span class="t" style="left:125.14px;top:929.00px;font-size:14px;color:#1f1f1f;transform:scaleX(0.9002);font-weight:700;-webkit-text-stroke:0;">Sheet1</span>
<div style="left:125.5px;top:945px;width:40.6px;height:2.4px;background:#107c41;border-radius:1px;"></div>
<span class="t" style="left:190.62px;top:932.00px;font-size:14px;color:#2b2b2b;transform:scaleX(0.9698);">Sheet2</span>
<span class="t" style="left:258.43px;top:932.00px;font-size:14px;color:#2b2b2b;transform:scaleX(0.9639);">Sheet1 (2)</span>
<div style="left:178px;top:930px;width:1px;height:18px;background:#cfcfcf;"></div>
<div style="left:246px;top:930px;width:1px;height:18px;background:#cfcfcf;"></div>
<div style="left:333px;top:930px;width:1px;height:18px;background:#cfcfcf;"></div>
<svg style="left:375px;top:933px;" width="12" height="12" viewBox="0 0 12 12"><path d="M6 0.5V11.5M0.5 6H11.5" stroke="#444" stroke-width="1.2"/></svg>
<div style="left:698px;top:934px;width:2px;height:2px;background:#444;border-radius:1px;"></div>
<div style="left:698px;top:939px;width:2px;height:2px;background:#444;border-radius:1px;"></div>
<div style="left:698px;top:944px;width:2px;height:2px;background:#444;border-radius:1px;"></div>
<div style="left:715px;top:930px;width:425px;height:17px;background:#f6f6f6;border-radius:8.5px;"></div>
<svg style="left:720px;top:934px;" width="7" height="9" viewBox="0 0 7 9"><path d="M0.3 4.5L6.7 0V9Z" fill="#7a7a7a"/></svg>
<svg style="left:1128px;top:934px;" width="7" height="9" viewBox="0 0 7 9"><path d="M6.7 4.5L0.3 0V9Z" fill="#7a7a7a"/></svg>
<div style="left:731.5px;top:934px;width:390.5px;height:9px;background:#767676;border-radius:4.5px;"></div>
<span class="t" style="left:11.51px;top:962.00px;font-size:11px;color:#2f2f2f;transform:scaleX(0.9838);">Ready</span>
<span class="t" style="left:59.79px;top:961.00px;font-size:11px;color:#2f2f2f;transform:scaleX(1.0292);">Sheet 1 of 3</span>
<span class="t" style="left:135.89px;top:962.00px;font-size:11px;color:#2f2f2f;transform:scaleX(1.0699);">Workbook Statistics</span>
<span class="t" style="left:257.49px;top:962.00px;font-size:11px;color:#2f2f2f;transform:scaleX(1.0123);">Num Lock</span>
<svg style="left:325px;top:960px;" width="15" height="14" viewBox="0 0 15 14">
<rect x="0.5" y="0.5" width="13" height="11" fill="none" stroke="#444" stroke-width="1"/>
<path d="M0.5 3.5H13.5M2.5 6H6M2.5 8.5H5" stroke="#444" stroke-width="1"/>
<circle cx="10" cy="9.5" r="3.6" fill="#f3f3f3" stroke="#333" stroke-width="1.1"/>
<circle cx="10" cy="9.5" r="1.4" fill="#333"/>
</svg>
<svg style="left:356px;top:959px;" width="16" height="16" viewBox="0 0 16 16">
<circle cx="6.5" cy="2.3" r="1.8" fill="none" stroke="#333" stroke-width="1.1"/>
<path d="M0.8 5.2C4 6.8 9 6.8 12.2 5.2M4.5 6.5V10L2 15M8.5 6.5V9" fill="none" stroke="#333" stroke-width="1.1"/>
<path d="M8.5 10L14.5 15.5M14.5 10L8.5 15.5" stroke="#333" stroke-width="1.3"/>
</svg>
<span class="t" style="left:375.21px;top:961.00px;font-size:11px;color:#2f2f2f;transform:scaleX(0.9572);font-weight:700;-webkit-text-stroke:0;">Accessibility: Investigate</span>
<div style="left:848px;top:956px;width:40px;height:21px;background:#dedede;"></div>
<svg style="left:861px;top:959px;shape-rendering:crispEdges;" width="13" height="13" viewBox="0 0 13 13">
<rect x="0.5" y="0.5" width="12" height="12" fill="none" stroke="#222" stroke-width="1.1"/>
<path d="M4.5 0.5V12.5M8.5 0.5V12.5M0.5 4.5H12.5M0.5 8.5H12.5" stroke="#222" stroke-width="1.1"/>
</svg>
<svg style="left:901px;top:959px;shape-rendering:crispEdges;" width="14" height="13" viewBox="0 0 14 13">
<rect x="0.5" y="0.5" width="13" height="12" fill="none" stroke="#222" stroke-width="1.1"/>
<rect x="3.5" y="3.5" width="7" height="6.5" fill="none" stroke="#222" stroke-width="1"/>
<path d="M5 5.5H9M5 7.5H9" stroke="#222" stroke-width="0.9"/>
</svg>
<svg style="left:941px;top:959px;shape-rendering:crispEdges;" width="14" height="13" viewBox="0 0 14 13">
<rect x="0.5" y="0.5" width="13" height="12" fill="none" stroke="#222" stroke-width="1.1"/>
<path d="M4.5 0.5V6.5H9.5V0.5" fill="none" stroke="#222" stroke-width="1.1"/>
</svg>
<div style="left:974px;top:965px;width:8px;height:1.3px;background:#333;"></div>
<div style="left:987px;top:966px;width:100px;height:1px;background:#777;"></div>
<div style="left:1037px;top:961px;width:5px;height:10.5px;background:#666;border-radius:1px;"></div>
<svg style="left:1092px;top:961px;" width="9" height="9" viewBox="0 0 9 9"><path d="M4.5 0V9M0 4.5H9" stroke="#333" stroke-width="1.2"/></svg>
<span class="t" style="left:1113.21px;top:961.00px;font-size:11px;color:#2f2f2f;transform:scaleX(0.9885);">110%</span>
</div></body></html>
